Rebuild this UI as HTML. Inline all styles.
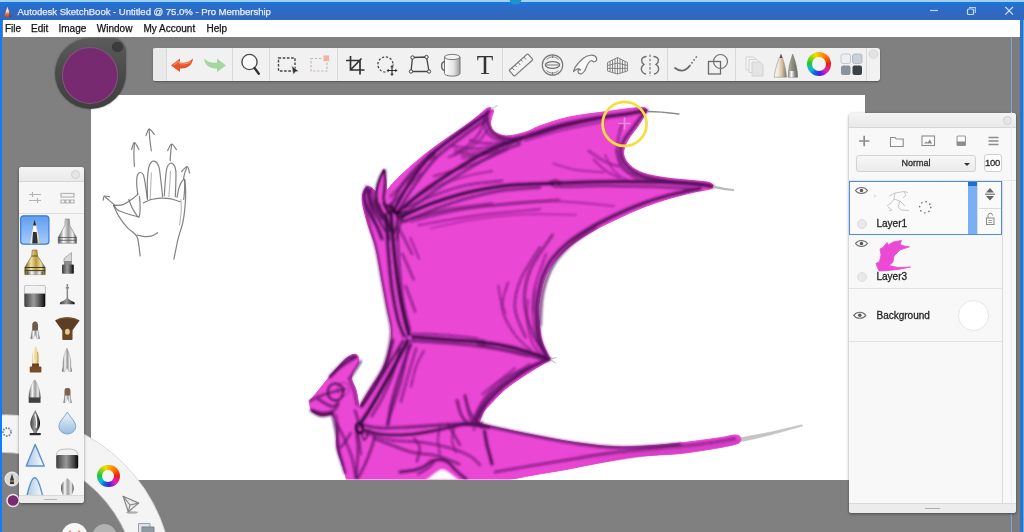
<!DOCTYPE html>
<html>
<head>
<meta charset="utf-8">
<title>Autodesk SketchBook</title>
<style>
*{box-sizing:border-box;margin:0;padding:0}
html,body{width:1024px;height:532px;overflow:hidden;background:#808080;font-family:"Liberation Sans",sans-serif}
#app{position:relative;width:1024px;height:532px;overflow:hidden;background:#808080;filter:blur(.4px)}
.abs{position:absolute}
#topstrip{left:0;top:0;width:1024px;height:2px;background:#9fd2f2}
#titlebar{left:0;top:1.5px;width:1024px;height:19px;background:linear-gradient(#1c76dc 0,#2b6ccb 5px,#2f69c0 10px,#2f68bf 17.500px,#35599a 19px);color:#e4eefc;font-size:9.6px;line-height:19px}
#titlebar span{-webkit-text-stroke:.25px #e4eefc;position:absolute;left:17.5px;top:0;white-space:nowrap;letter-spacing:-.05px}
#menubar{left:2.5px;top:20.3px;width:1018.5px;height:16.3px;background:#fff;font-size:10px;color:#111;line-height:16px}
#menubar span{-webkit-text-stroke:.25px #111;position:absolute;top:1px;white-space:nowrap}
#lborder{left:0;top:20px;width:2.2px;height:512px;background:#0b7dff}
#rborder{left:1019.6px;top:20px;width:4.4px;height:512px;background:linear-gradient(90deg,#2b73c9 0,#2b73c9 3.2px,#6fc0ff 3.6px)}
#rshade{left:1011px;top:37px;width:10px;height:495px;background:#7b7c7e}
#rline{left:1010.5px;top:37px;width:1px;height:495px;background:#7aaeec;opacity:.8}
#canvas{left:91px;top:95px;width:774px;height:384.5px;background:#fff}
#toolbar{left:152.5px;top:48px;width:727.5px;height:33px;background:#f1f1f1;border-radius:3px;box-shadow:0 1px 2px rgba(0,0,0,.35)}
.sep{position:absolute;top:0;width:1px;height:33px;background:#dcdcdc}
#layers{left:848.5px;top:112.5px;width:167px;height:400px;background:#f8f8f8;border-radius:3px;box-shadow:0 1px 3px rgba(0,0,0,.45);overflow:hidden}
#brushes{left:19px;top:166.5px;width:65px;height:336.5px;background:#f6f6f6;border-radius:3px;box-shadow:0 1px 3px rgba(0,0,0,.45);overflow:hidden}
.ptitle{position:absolute;left:0;top:0;right:0;height:15px;background:linear-gradient(#f4f4f4,#e9e9e9);border-bottom:1px solid #d6d6d6}
.pclose{position:absolute;width:9px;height:9px;border-radius:50%;border:1px solid #d0d0d0;background:#e6e6e6}
.lt{-webkit-text-stroke:.3px #2a2a2a;font-size:10px;color:#222;position:absolute;white-space:nowrap}
</style>
</head>
<body>
<div id="app">
  <div id="rshade" class="abs"></div>
  <div id="rline" class="abs"></div>
  <div id="canvas" class="abs"></div>
<svg id="art" class="abs" style="left:0;top:0" width="1024" height="532" viewBox="0 0 1024 532">
<defs><clipPath id="cv"><rect x="91" y="95" width="774" height="384.5"/></clipPath><filter id="b1" x="-5%" y="-5%" width="110%" height="110%"><feGaussianBlur stdDeviation=".6"/></filter><filter id="b2" x="-5%" y="-5%" width="110%" height="110%"><feGaussianBlur stdDeviation=".8"/></filter><linearGradient id="tailg" gradientUnits="userSpaceOnUse" x1="560" y1="0" x2="640" y2="0"><stop offset="0" stop-color="#c233b6" stop-opacity="0"/><stop offset="1" stop-color="#c233b6" stop-opacity=".45"/></linearGradient><filter id="b3" x="-5%" y="-5%" width="110%" height="110%"><feGaussianBlur stdDeviation=".45"/></filter></defs>
<g clip-path="url(#cv)">
<path d="M486.5 108.5 C487.2 108.3 489.3 107.1 490.5 107.5 C491.7 107.9 493.3 109.2 493.5 111.0 C493.7 112.8 492.0 115.7 491.5 118.0 C491.0 120.3 490.0 122.7 490.5 125.0 C491.0 127.3 492.1 130.3 494.7 132.1 C497.3 133.9 501.2 136.0 506.4 136.0 C511.6 136.0 520.4 133.7 526.0 132.0 C531.6 130.3 532.8 128.3 540.0 125.8 C547.2 123.3 558.5 119.3 569.3 117.0 C580.0 114.7 593.8 113.3 604.5 111.8 C615.2 110.3 627.2 108.7 633.8 108.0 C640.4 107.3 641.7 107.1 644.0 107.5 C646.3 107.9 646.9 110.0 647.5 110.5 C646.8 111.8 644.6 115.4 643.0 118.0 C641.4 120.6 640.3 122.6 637.8 126.3 C635.3 130.0 630.4 135.4 628.0 140.0 C625.6 144.6 623.2 149.5 623.5 153.7 C623.8 157.9 626.6 162.2 630.0 165.4 C633.4 168.7 637.4 171.1 643.6 173.2 C649.8 175.3 658.2 176.7 667.0 178.0 C675.8 179.3 689.4 180.2 696.4 181.0 C703.4 181.8 706.0 181.6 709.0 182.5 C712.0 183.4 713.6 185.8 714.5 186.5 C713.4 187.0 711.6 188.5 708.0 189.5 C704.4 190.5 700.0 190.6 692.8 192.3 C685.6 194.1 673.2 197.3 664.6 200.0 C656.0 202.7 648.9 205.1 641.0 208.2 C633.1 211.3 625.3 215.1 617.5 218.8 C609.7 222.5 601.8 226.0 594.0 230.5 C586.2 235.0 577.2 240.5 570.5 245.8 C563.8 251.1 558.3 256.8 554.0 262.3 C549.7 267.8 547.0 272.8 544.7 278.7 C542.4 284.6 541.0 291.7 540.0 297.5 C539.0 303.3 538.5 306.9 538.7 313.5 C538.9 320.1 539.8 330.8 541.0 337.0 C542.2 343.2 544.3 347.2 546.0 351.0 C547.7 354.8 550.2 358.1 551.0 359.5 C549.3 360.4 545.8 362.3 541.0 365.2 C536.2 368.1 528.2 373.1 522.3 377.0 C516.4 380.9 510.9 384.4 505.8 388.7 C500.7 393.0 495.4 398.9 491.7 402.8 C488.0 406.7 485.5 408.6 483.4 412.0 C481.3 415.4 479.7 421.5 479.0 423.4 C484.2 424.6 499.2 428.1 510.3 430.4 C521.4 432.7 533.8 435.2 545.5 437.4 C557.2 439.5 568.9 441.7 580.6 443.3 C592.3 444.9 604.1 446.4 615.8 446.8 C627.5 447.2 640.2 446.2 650.9 445.6 C661.6 445.0 668.8 444.3 680.0 443.0 C691.2 441.7 708.7 439.3 718.0 438.0 C727.3 436.7 732.0 434.9 736.0 435.0 C740.0 435.1 740.8 437.9 741.8 438.5 C741.2 439.3 742.0 441.8 738.0 443.4 C734.0 445.0 727.8 446.2 718.0 447.9 C708.2 449.6 692.1 452.3 679.0 453.7 C665.9 455.1 651.7 454.8 639.2 456.2 C626.7 457.6 615.7 459.9 604.0 462.0 C592.3 464.1 580.6 466.8 568.9 469.0 C557.2 471.2 543.5 473.2 533.7 475.0 C523.9 476.8 514.2 478.8 510.3 479.5 C483.0 479.5 373.7 479.5 346.4 479.5 C345.7 476.9 343.8 469.4 342.2 464.0 C340.6 458.6 337.9 453.8 337.0 447.2 C336.1 440.6 337.3 430.1 336.5 424.6 C335.7 419.1 333.0 416.0 332.3 414.3 C330.4 414.4 324.5 415.8 321.0 415.2 C317.5 414.6 313.4 412.9 311.5 410.5 C309.6 408.1 309.8 402.6 309.5 401.0 C310.9 399.3 314.7 395.1 318.0 391.0 C321.3 386.9 326.3 380.5 329.5 376.7 C332.7 372.9 334.2 371.1 337.0 368.0 C339.8 364.9 343.7 360.6 346.4 358.3 C349.1 356.1 351.1 354.9 353.0 354.5 C354.9 354.1 356.6 354.6 357.5 356.0 C358.4 357.4 359.5 359.2 358.5 362.6 C357.5 366.1 351.9 372.0 351.5 376.7 C351.1 381.4 355.1 385.6 356.3 390.8 C357.6 396.0 358.6 404.9 359.0 407.7 C360.7 404.9 365.0 397.4 369.0 390.8 C373.0 384.2 379.6 375.3 383.0 368.2 C386.4 361.1 388.1 354.7 389.5 348.4 C390.9 342.1 391.9 337.2 391.5 330.5 C391.1 323.8 388.7 316.7 387.0 307.9 C385.3 299.1 383.3 287.8 381.4 277.8 C379.5 267.8 377.9 256.5 375.7 247.7 C373.5 238.9 370.3 232.1 368.2 225.2 C366.1 218.2 363.9 211.0 363.0 206.0 C362.1 201.0 362.1 198.1 362.6 195.0 C363.2 191.9 364.9 188.4 366.3 187.2 C367.7 185.9 369.4 186.7 371.0 187.5 C372.6 188.3 375.2 191.2 376.0 192.0 C376.4 190.3 377.2 185.8 378.5 182.0 C379.8 178.2 382.9 171.6 383.8 169.5 C384.2 171.2 385.6 176.4 386.0 180.0 C386.4 183.6 386.4 189.2 386.5 191.0 C388.6 188.7 391.9 183.7 398.9 177.1 C405.8 170.5 416.8 160.5 428.2 151.7 C439.6 142.9 457.6 131.5 467.3 124.3 C477.0 117.1 483.3 111.1 486.5 108.5 Z" fill="#eb47d5" stroke="#eb47d5" stroke-width="1" stroke-linejoin="round" filter="url(#b1)"/>
<path d="M425.5 480 C432 476 438 469 442.5 469.2 C447 469.4 453 476 459.5 480 Z" fill="#fff" filter="url(#b2)"/>
<path d="M560 452 C600 455 640 452 680 448 C705 445 725 441.500 740 439 L738 443.400 C718 448 690 452.500 660 455 C625 459 590 465 560 470 Z" fill="url(#tailg)" filter="url(#b1)"/>
<g filter="url(#b2)">
<path d="M393.0 212.0 C395.8 207.0 403.7 191.4 410.0 182.0 C416.3 172.6 422.7 163.8 431.0 155.5 C439.3 147.2 451.1 138.7 460.0 132.0 C468.9 125.3 479.6 119.0 484.4 115.5 C489.2 112.0 488.2 111.8 489.0 111.0" fill="none" stroke="#8a1a92" stroke-width="5.4" stroke-opacity="0.32" stroke-linecap="round" stroke-linejoin="round"/>
<path d="M393.0 212.0 C395.8 207.0 403.7 191.4 410.0 182.0 C416.3 172.6 422.7 163.8 431.0 155.5 C439.3 147.2 451.1 138.7 460.0 132.0 C468.9 125.3 479.6 119.0 484.4 115.5 C489.2 112.0 488.2 111.8 489.0 111.0" fill="none" stroke="#4b0d52" stroke-width="2.7" stroke-opacity="1.00" stroke-linecap="round" stroke-linejoin="round"/>
<path d="M397.0 213.0 C399.8 208.5 407.5 195.2 414.0 186.0 C420.5 176.8 427.5 166.5 436.0 158.0 C444.5 149.5 456.5 141.5 465.0 135.0 C473.5 128.5 483.3 121.7 487.0 119.0" fill="none" stroke="#8a1a92" stroke-width="4.1" stroke-opacity="0.23" stroke-linecap="round" stroke-linejoin="round"/>
<path d="M397.0 213.0 C399.8 208.5 407.5 195.2 414.0 186.0 C420.5 176.8 427.5 166.5 436.0 158.0 C444.5 149.5 456.5 141.5 465.0 135.0 C473.5 128.5 483.3 121.7 487.0 119.0" fill="none" stroke="#4b0d52" stroke-width="2.0" stroke-opacity="0.80" stroke-linecap="round" stroke-linejoin="round"/>
<path d="M391.0 206.5 C393.2 202.4 397.5 190.7 404.0 182.0 C410.5 173.3 419.4 163.5 430.0 154.5 C440.6 145.5 457.9 135.0 467.5 128.0 C477.1 121.0 484.2 115.1 487.5 112.5" fill="none" stroke="#8a1a92" stroke-width="4.4" stroke-opacity="0.21" stroke-linecap="round" stroke-linejoin="round"/>
<path d="M391.0 206.5 C393.2 202.4 397.5 190.7 404.0 182.0 C410.5 173.3 419.4 163.5 430.0 154.5 C440.6 145.5 457.9 135.0 467.5 128.0 C477.1 121.0 484.2 115.1 487.5 112.5" fill="none" stroke="#4b0d52" stroke-width="2.2" stroke-opacity="0.72" stroke-linecap="round" stroke-linejoin="round"/>
<path d="M398.0 212.0 C402.5 208.3 414.4 197.7 425.0 190.0 C435.6 182.3 450.8 172.7 461.6 166.0 C472.4 159.3 480.7 154.4 490.0 150.0 C499.3 145.6 509.1 142.4 517.4 139.6 C525.7 136.8 532.4 135.3 540.0 133.0 C547.6 130.7 553.0 128.5 563.0 126.0 C573.0 123.5 588.8 120.1 600.0 118.0 C611.2 115.9 622.3 114.8 630.0 113.5 C637.7 112.2 643.3 111.0 646.0 110.5" fill="none" stroke="#8a1a92" stroke-width="6.1" stroke-opacity="0.29" stroke-linecap="round" stroke-linejoin="round"/>
<path d="M398.0 212.0 C402.5 208.3 414.4 197.7 425.0 190.0 C435.6 182.3 450.8 172.7 461.6 166.0 C472.4 159.3 480.7 154.4 490.0 150.0 C499.3 145.6 509.1 142.4 517.4 139.6 C525.7 136.8 532.4 135.3 540.0 133.0 C547.6 130.7 553.0 128.5 563.0 126.0 C573.0 123.5 588.8 120.1 600.0 118.0 C611.2 115.9 622.3 114.8 630.0 113.5 C637.7 112.2 643.3 111.0 646.0 110.5" fill="none" stroke="#4b0d52" stroke-width="3.1" stroke-opacity="1.00" stroke-linecap="round" stroke-linejoin="round"/>
<path d="M402.0 216.0 C406.7 212.3 419.5 201.5 430.0 194.0 C440.5 186.5 454.2 177.7 465.0 171.0 C475.8 164.3 485.8 158.5 495.0 154.0 C504.2 149.5 515.8 145.7 520.0 144.0" fill="none" stroke="#8a1a92" stroke-width="4.1" stroke-opacity="0.21" stroke-linecap="round" stroke-linejoin="round"/>
<path d="M402.0 216.0 C406.7 212.3 419.5 201.5 430.0 194.0 C440.5 186.5 454.2 177.7 465.0 171.0 C475.8 164.3 485.8 158.5 495.0 154.0 C504.2 149.5 515.8 145.7 520.0 144.0" fill="none" stroke="#4b0d52" stroke-width="2.0" stroke-opacity="0.72" stroke-linecap="round" stroke-linejoin="round"/>
<path d="M520.0 137.5 C526.7 135.4 546.7 128.3 560.0 125.0 C573.3 121.7 586.7 119.7 600.0 117.5 C613.3 115.3 633.3 112.9 640.0 112.0" fill="none" stroke="#8a1a92" stroke-width="4.4" stroke-opacity="0.19" stroke-linecap="round" stroke-linejoin="round"/>
<path d="M520.0 137.5 C526.7 135.4 546.7 128.3 560.0 125.0 C573.3 121.7 586.7 119.7 600.0 117.5 C613.3 115.3 633.3 112.9 640.0 112.0" fill="none" stroke="#4b0d52" stroke-width="2.2" stroke-opacity="0.65" stroke-linecap="round" stroke-linejoin="round"/>
<path d="M400.6 217.0 C405.5 214.8 419.8 207.8 430.0 204.0 C440.2 200.2 451.6 196.7 461.6 194.0 C471.6 191.3 481.5 189.5 490.0 188.0 C498.5 186.5 501.5 185.8 512.4 185.0 C523.3 184.2 542.6 183.8 555.5 183.3 C568.4 182.8 579.2 182.3 590.0 182.0 C600.8 181.7 608.3 181.5 620.0 181.5 C631.7 181.5 646.7 181.5 660.0 182.0 C673.3 182.5 691.3 183.8 700.0 184.5 C708.7 185.2 710.0 186.2 712.0 186.5" fill="none" stroke="#8a1a92" stroke-width="6.1" stroke-opacity="0.29" stroke-linecap="round" stroke-linejoin="round"/>
<path d="M400.6 217.0 C405.5 214.8 419.8 207.8 430.0 204.0 C440.2 200.2 451.6 196.7 461.6 194.0 C471.6 191.3 481.5 189.5 490.0 188.0 C498.5 186.5 501.5 185.8 512.4 185.0 C523.3 184.2 542.6 183.8 555.5 183.3 C568.4 182.8 579.2 182.3 590.0 182.0 C600.8 181.7 608.3 181.5 620.0 181.5 C631.7 181.5 646.7 181.5 660.0 182.0 C673.3 182.5 691.3 183.8 700.0 184.5 C708.7 185.2 710.0 186.2 712.0 186.5" fill="none" stroke="#4b0d52" stroke-width="3.1" stroke-opacity="1.00" stroke-linecap="round" stroke-linejoin="round"/>
<path d="M404.0 222.0 C409.2 219.8 424.8 212.8 435.0 209.0 C445.2 205.2 454.2 202.0 465.0 199.0 C475.8 196.0 487.5 192.9 500.0 191.0 C512.5 189.1 533.3 188.1 540.0 187.5" fill="none" stroke="#8a1a92" stroke-width="4.1" stroke-opacity="0.21" stroke-linecap="round" stroke-linejoin="round"/>
<path d="M404.0 222.0 C409.2 219.8 424.8 212.8 435.0 209.0 C445.2 205.2 454.2 202.0 465.0 199.0 C475.8 196.0 487.5 192.9 500.0 191.0 C512.5 189.1 533.3 188.1 540.0 187.5" fill="none" stroke="#4b0d52" stroke-width="2.0" stroke-opacity="0.72" stroke-linecap="round" stroke-linejoin="round"/>
<path d="M560.0 187.0 C566.7 186.8 585.0 186.1 600.0 186.0 C615.0 185.9 633.3 186.0 650.0 186.5 C666.7 187.0 691.7 188.6 700.0 189.0" fill="none" stroke="#8a1a92" stroke-width="4.1" stroke-opacity="0.19" stroke-linecap="round" stroke-linejoin="round"/>
<path d="M560.0 187.0 C566.7 186.8 585.0 186.1 600.0 186.0 C615.0 185.9 633.3 186.0 650.0 186.5 C666.7 187.0 691.7 188.6 700.0 189.0" fill="none" stroke="#4b0d52" stroke-width="2.0" stroke-opacity="0.65" stroke-linecap="round" stroke-linejoin="round"/>
<ellipse cx="431.5" cy="156" rx="3.6" ry="2.4" transform="rotate(-40 431.5 156)" fill="none" stroke="#3a0b3e" stroke-width="1.3" stroke-opacity=".8"/>
<ellipse cx="517.5" cy="139.5" rx="4" ry="2.4" transform="rotate(-18 517.5 139.5)" fill="none" stroke="#3a0b3e" stroke-width="1.3" stroke-opacity=".75"/>
<path d="M548 183 L555 180 L562 182.5 L556 187.5 Z" fill="none" stroke="#3a0b3e" stroke-width="1.4" stroke-opacity=".8"/>
<ellipse cx="481.5" cy="343" rx="4.2" ry="3" fill="#6a1a6a" fill-opacity=".5" stroke="#3a0b3e" stroke-width="1.2" stroke-opacity=".7"/>
<circle cx="410" cy="337.5" r="3.6" fill="none" stroke="#3a0b3e" stroke-width="1.3" stroke-opacity=".8"/>
<path d="M487.0 113.0 C487.2 114.8 487.0 120.7 488.0 124.0 C489.0 127.3 490.3 130.7 493.0 133.0 C495.7 135.3 500.0 137.0 504.0 138.0 C508.0 139.0 514.8 138.8 517.0 139.0" fill="none" stroke="#8a1a92" stroke-width="5.1" stroke-opacity="0.25" stroke-linecap="round" stroke-linejoin="round"/>
<path d="M487.0 113.0 C487.2 114.8 487.0 120.7 488.0 124.0 C489.0 127.3 490.3 130.7 493.0 133.0 C495.7 135.3 500.0 137.0 504.0 138.0 C508.0 139.0 514.8 138.8 517.0 139.0" fill="none" stroke="#4b0d52" stroke-width="2.5" stroke-opacity="0.87" stroke-linecap="round" stroke-linejoin="round"/>
<path d="M484.0 118.0 C484.2 119.7 483.7 124.8 485.0 128.0 C486.3 131.2 488.7 134.8 492.0 137.0 C495.3 139.2 502.8 140.3 505.0 141.0" fill="none" stroke="#8a1a92" stroke-width="3.7" stroke-opacity="0.19" stroke-linecap="round" stroke-linejoin="round"/>
<path d="M484.0 118.0 C484.2 119.7 483.7 124.8 485.0 128.0 C486.3 131.2 488.7 134.8 492.0 137.0 C495.3 139.2 502.8 140.3 505.0 141.0" fill="none" stroke="#4b0d52" stroke-width="1.9" stroke-opacity="0.65" stroke-linecap="round" stroke-linejoin="round"/>
<path d="M470.0 140.0 C471.7 140.5 475.8 142.5 480.0 143.0 C484.2 143.5 490.0 143.3 495.0 143.0 C500.0 142.7 507.5 141.3 510.0 141.0" fill="none" stroke="#8a1a92" stroke-width="3.4" stroke-opacity="0.17" stroke-linecap="round" stroke-linejoin="round"/>
<path d="M470.0 140.0 C471.7 140.5 475.8 142.5 480.0 143.0 C484.2 143.5 490.0 143.3 495.0 143.0 C500.0 142.7 507.5 141.3 510.0 141.0" fill="none" stroke="#4b0d52" stroke-width="1.7" stroke-opacity="0.58" stroke-linecap="round" stroke-linejoin="round"/>
<path d="M455.0 150.0 C457.5 150.5 464.2 153.0 470.0 153.0 C475.8 153.0 483.7 151.5 490.0 150.0 C496.3 148.5 505.0 145.0 508.0 144.0" fill="none" stroke="#8a1a92" stroke-width="3.4" stroke-opacity="0.15" stroke-linecap="round" stroke-linejoin="round"/>
<path d="M455.0 150.0 C457.5 150.5 464.2 153.0 470.0 153.0 C475.8 153.0 483.7 151.5 490.0 150.0 C496.3 148.5 505.0 145.0 508.0 144.0" fill="none" stroke="#4b0d52" stroke-width="1.7" stroke-opacity="0.51" stroke-linecap="round" stroke-linejoin="round"/>
<path d="M462.0 158.0 C465.0 157.7 474.0 157.3 480.0 156.0 C486.0 154.7 495.0 151.0 498.0 150.0" fill="none" stroke="#8a1a92" stroke-width="3.4" stroke-opacity="0.15" stroke-linecap="round" stroke-linejoin="round"/>
<path d="M462.0 158.0 C465.0 157.7 474.0 157.3 480.0 156.0 C486.0 154.7 495.0 151.0 498.0 150.0" fill="none" stroke="#4b0d52" stroke-width="1.7" stroke-opacity="0.51" stroke-linecap="round" stroke-linejoin="round"/>
<path d="M391.0 214.0 C391.5 220.0 392.7 237.3 394.0 250.0 C395.3 262.7 397.2 278.3 399.0 290.0 C400.8 301.7 403.3 312.7 405.0 320.0 C406.7 327.3 408.3 331.7 409.0 334.0" fill="none" stroke="#8a1a92" stroke-width="6.1" stroke-opacity="0.32" stroke-linecap="round" stroke-linejoin="round"/>
<path d="M391.0 214.0 C391.5 220.0 392.7 237.3 394.0 250.0 C395.3 262.7 397.2 278.3 399.0 290.0 C400.8 301.7 403.3 312.7 405.0 320.0 C406.7 327.3 408.3 331.7 409.0 334.0" fill="none" stroke="#4b0d52" stroke-width="3.1" stroke-opacity="1.00" stroke-linecap="round" stroke-linejoin="round"/>
<path d="M386.0 215.0 C386.3 220.8 387.0 237.5 388.0 250.0 C389.0 262.5 390.3 278.3 392.0 290.0 C393.7 301.7 396.0 312.3 398.0 320.0 C400.0 327.7 403.0 333.3 404.0 336.0" fill="none" stroke="#8a1a92" stroke-width="5.1" stroke-opacity="0.25" stroke-linecap="round" stroke-linejoin="round"/>
<path d="M386.0 215.0 C386.3 220.8 387.0 237.5 388.0 250.0 C389.0 262.5 390.3 278.3 392.0 290.0 C393.7 301.7 396.0 312.3 398.0 320.0 C400.0 327.7 403.0 333.3 404.0 336.0" fill="none" stroke="#4b0d52" stroke-width="2.5" stroke-opacity="0.87" stroke-linecap="round" stroke-linejoin="round"/>
<path d="M397.0 222.0 C397.3 228.3 398.0 247.0 399.0 260.0 C400.0 273.0 401.2 288.3 403.0 300.0 C404.8 311.7 408.8 325.0 410.0 330.0" fill="none" stroke="#8a1a92" stroke-width="3.7" stroke-opacity="0.19" stroke-linecap="round" stroke-linejoin="round"/>
<path d="M397.0 222.0 C397.3 228.3 398.0 247.0 399.0 260.0 C400.0 273.0 401.2 288.3 403.0 300.0 C404.8 311.7 408.8 325.0 410.0 330.0" fill="none" stroke="#4b0d52" stroke-width="1.9" stroke-opacity="0.65" stroke-linecap="round" stroke-linejoin="round"/>
<path d="M407.5 341.0 C405.4 345.0 399.6 356.5 395.0 365.0 C390.4 373.5 384.5 384.2 380.0 392.0 C375.5 399.8 371.3 406.7 368.0 412.0 C364.7 417.3 361.3 422.0 360.0 424.0" fill="none" stroke="#8a1a92" stroke-width="6.1" stroke-opacity="0.32" stroke-linecap="round" stroke-linejoin="round"/>
<path d="M407.5 341.0 C405.4 345.0 399.6 356.5 395.0 365.0 C390.4 373.5 384.5 384.2 380.0 392.0 C375.5 399.8 371.3 406.7 368.0 412.0 C364.7 417.3 361.3 422.0 360.0 424.0" fill="none" stroke="#4b0d52" stroke-width="3.1" stroke-opacity="1.00" stroke-linecap="round" stroke-linejoin="round"/>
<path d="M411.0 344.0 C409.5 348.0 404.7 360.1 402.0 368.0 C399.3 375.9 396.6 384.6 394.6 391.6 C392.6 398.6 391.1 404.4 390.0 410.0 C388.9 415.6 388.3 422.5 388.0 425.0" fill="none" stroke="#8a1a92" stroke-width="4.4" stroke-opacity="0.23" stroke-linecap="round" stroke-linejoin="round"/>
<path d="M411.0 344.0 C409.5 348.0 404.7 360.1 402.0 368.0 C399.3 375.9 396.6 384.6 394.6 391.6 C392.6 398.6 391.1 404.4 390.0 410.0 C388.9 415.6 388.3 422.5 388.0 425.0" fill="none" stroke="#4b0d52" stroke-width="2.2" stroke-opacity="0.80" stroke-linecap="round" stroke-linejoin="round"/>
<path d="M403.0 341.0 C400.7 344.8 393.8 356.2 389.0 364.0 C384.2 371.8 378.5 381.0 374.0 388.0 C369.5 395.0 364.0 403.0 362.0 406.0" fill="none" stroke="#8a1a92" stroke-width="4.1" stroke-opacity="0.21" stroke-linecap="round" stroke-linejoin="round"/>
<path d="M403.0 341.0 C400.7 344.8 393.8 356.2 389.0 364.0 C384.2 371.8 378.5 381.0 374.0 388.0 C369.5 395.0 364.0 403.0 362.0 406.0" fill="none" stroke="#4b0d52" stroke-width="2.0" stroke-opacity="0.72" stroke-linecap="round" stroke-linejoin="round"/>
<path d="M413.0 337.0 C417.5 337.3 428.9 338.2 440.0 339.0 C451.1 339.8 468.0 340.7 479.7 342.0 C491.4 343.3 500.8 345.0 510.0 347.0 C519.2 349.0 528.5 352.0 535.0 354.0 C541.5 356.0 546.7 358.2 549.0 359.0" fill="none" stroke="#8a1a92" stroke-width="6.1" stroke-opacity="0.29" stroke-linecap="round" stroke-linejoin="round"/>
<path d="M413.0 337.0 C417.5 337.3 428.9 338.2 440.0 339.0 C451.1 339.8 468.0 340.7 479.7 342.0 C491.4 343.3 500.8 345.0 510.0 347.0 C519.2 349.0 528.5 352.0 535.0 354.0 C541.5 356.0 546.7 358.2 549.0 359.0" fill="none" stroke="#4b0d52" stroke-width="3.1" stroke-opacity="1.00" stroke-linecap="round" stroke-linejoin="round"/>
<path d="M413.0 341.0 C418.3 341.3 433.8 342.1 445.0 343.0 C456.2 343.9 468.3 345.0 480.0 346.5 C491.7 348.0 504.2 349.8 515.0 352.0 C525.8 354.2 540.0 358.7 545.0 360.0" fill="none" stroke="#8a1a92" stroke-width="4.1" stroke-opacity="0.21" stroke-linecap="round" stroke-linejoin="round"/>
<path d="M413.0 341.0 C418.3 341.3 433.8 342.1 445.0 343.0 C456.2 343.9 468.3 345.0 480.0 346.5 C491.7 348.0 504.2 349.8 515.0 352.0 C525.8 354.2 540.0 358.7 545.0 360.0" fill="none" stroke="#4b0d52" stroke-width="2.0" stroke-opacity="0.72" stroke-linecap="round" stroke-linejoin="round"/>
<path d="M414.0 333.5 C419.2 333.8 434.3 334.2 445.0 335.0 C455.7 335.8 472.5 337.9 478.0 338.5" fill="none" stroke="#8a1a92" stroke-width="3.4" stroke-opacity="0.17" stroke-linecap="round" stroke-linejoin="round"/>
<path d="M414.0 333.5 C419.2 333.8 434.3 334.2 445.0 335.0 C455.7 335.8 472.5 337.9 478.0 338.5" fill="none" stroke="#4b0d52" stroke-width="1.7" stroke-opacity="0.58" stroke-linecap="round" stroke-linejoin="round"/>
<path d="M366.0 190.0 C365.7 191.7 363.5 194.3 364.0 200.0 C364.5 205.7 367.0 216.0 369.0 224.0 C371.0 232.0 373.9 239.0 376.0 248.0 C378.1 257.0 379.7 268.0 381.5 278.0 C383.3 288.0 385.4 299.3 387.0 308.0 C388.6 316.7 390.7 323.3 391.0 330.0 C391.3 336.7 390.3 341.7 389.0 348.0 C387.7 354.3 386.3 360.8 383.0 368.0 C379.7 375.2 372.8 384.7 369.0 391.0 C365.2 397.3 361.5 403.5 360.0 406.0" fill="none" stroke="#8a1a92" stroke-width="4.1" stroke-opacity="0.19" stroke-linecap="round" stroke-linejoin="round"/>
<path d="M366.0 190.0 C365.7 191.7 363.5 194.3 364.0 200.0 C364.5 205.7 367.0 216.0 369.0 224.0 C371.0 232.0 373.9 239.0 376.0 248.0 C378.1 257.0 379.7 268.0 381.5 278.0 C383.3 288.0 385.4 299.3 387.0 308.0 C388.6 316.7 390.7 323.3 391.0 330.0 C391.3 336.7 390.3 341.7 389.0 348.0 C387.7 354.3 386.3 360.8 383.0 368.0 C379.7 375.2 372.8 384.7 369.0 391.0 C365.2 397.3 361.5 403.5 360.0 406.0" fill="none" stroke="#4b0d52" stroke-width="2.0" stroke-opacity="0.65" stroke-linecap="round" stroke-linejoin="round"/>
<path d="M700.0 188.5 C694.0 189.8 674.3 193.8 664.0 196.5 C653.7 199.2 646.2 201.9 638.0 205.0 C629.8 208.1 622.8 211.3 615.0 215.0 C607.2 218.7 599.3 222.4 591.5 227.0 C583.7 231.6 574.7 237.1 568.0 242.5 C561.3 247.9 555.8 253.8 551.5 259.5 C547.2 265.2 544.8 270.9 542.5 277.0 C540.2 283.1 539.0 290.0 538.0 296.0 C537.0 302.0 536.4 306.2 536.5 313.0 C536.6 319.8 536.8 329.8 538.5 337.0 C540.2 344.2 545.6 352.8 547.0 356.0" fill="none" stroke="#8a1a92" stroke-width="5.4" stroke-opacity="0.25" stroke-linecap="round" stroke-linejoin="round"/>
<path d="M700.0 188.5 C694.0 189.8 674.3 193.8 664.0 196.5 C653.7 199.2 646.2 201.9 638.0 205.0 C629.8 208.1 622.8 211.3 615.0 215.0 C607.2 218.7 599.3 222.4 591.5 227.0 C583.7 231.6 574.7 237.1 568.0 242.5 C561.3 247.9 555.8 253.8 551.5 259.5 C547.2 265.2 544.8 270.9 542.5 277.0 C540.2 283.1 539.0 290.0 538.0 296.0 C537.0 302.0 536.4 306.2 536.5 313.0 C536.6 319.8 536.8 329.8 538.5 337.0 C540.2 344.2 545.6 352.8 547.0 356.0" fill="none" stroke="#4b0d52" stroke-width="2.7" stroke-opacity="0.87" stroke-linecap="round" stroke-linejoin="round"/>
<path d="M688.0 190.0 C681.3 192.0 660.7 197.4 648.0 202.0 C635.3 206.6 623.2 211.8 612.0 217.5 C600.8 223.2 590.2 229.1 581.0 236.0 C571.8 242.9 563.0 251.2 557.0 259.0 C551.0 266.8 547.8 274.5 545.0 283.0 C542.2 291.5 540.8 301.3 540.0 310.0 C539.2 318.7 539.2 328.0 540.0 335.0 C540.8 342.0 544.2 349.2 545.0 352.0" fill="none" stroke="#8a1a92" stroke-width="3.7" stroke-opacity="0.17" stroke-linecap="round" stroke-linejoin="round"/>
<path d="M688.0 190.0 C681.3 192.0 660.7 197.4 648.0 202.0 C635.3 206.6 623.2 211.8 612.0 217.5 C600.8 223.2 590.2 229.1 581.0 236.0 C571.8 242.9 563.0 251.2 557.0 259.0 C551.0 266.8 547.8 274.5 545.0 283.0 C542.2 291.5 540.8 301.3 540.0 310.0 C539.2 318.7 539.2 328.0 540.0 335.0 C540.8 342.0 544.2 349.2 545.0 352.0" fill="none" stroke="#4b0d52" stroke-width="1.9" stroke-opacity="0.58" stroke-linecap="round" stroke-linejoin="round"/>
<path d="M596.0 228.0 C591.7 231.0 577.3 239.3 570.0 246.0 C562.7 252.7 556.5 259.8 552.0 268.0 C547.5 276.2 544.8 285.5 543.0 295.0 C541.2 304.5 541.3 320.0 541.0 325.0" fill="none" stroke="#8a1a92" stroke-width="3.4" stroke-opacity="0.15" stroke-linecap="round" stroke-linejoin="round"/>
<path d="M596.0 228.0 C591.7 231.0 577.3 239.3 570.0 246.0 C562.7 252.7 556.5 259.8 552.0 268.0 C547.5 276.2 544.8 285.5 543.0 295.0 C541.2 304.5 541.3 320.0 541.0 325.0" fill="none" stroke="#4b0d52" stroke-width="1.7" stroke-opacity="0.51" stroke-linecap="round" stroke-linejoin="round"/>
<path d="M535.0 290.0 C534.7 294.2 532.7 306.7 533.0 315.0 C533.3 323.3 535.0 333.2 537.0 340.0 C539.0 346.8 543.7 353.3 545.0 356.0" fill="none" stroke="#8a1a92" stroke-width="3.4" stroke-opacity="0.13" stroke-linecap="round" stroke-linejoin="round"/>
<path d="M535.0 290.0 C534.7 294.2 532.7 306.7 533.0 315.0 C533.3 323.3 535.0 333.2 537.0 340.0 C539.0 346.8 543.7 353.3 545.0 356.0" fill="none" stroke="#4b0d52" stroke-width="1.7" stroke-opacity="0.43" stroke-linecap="round" stroke-linejoin="round"/>
<path d="M528.0 300.0 C527.8 303.3 526.3 313.0 527.0 320.0 C527.7 327.0 529.7 336.2 532.0 342.0 C534.3 347.8 539.5 352.8 541.0 355.0" fill="none" stroke="#8a1a92" stroke-width="3.4" stroke-opacity="0.13" stroke-linecap="round" stroke-linejoin="round"/>
<path d="M528.0 300.0 C527.8 303.3 526.3 313.0 527.0 320.0 C527.7 327.0 529.7 336.2 532.0 342.0 C534.3 347.8 539.5 352.8 541.0 355.0" fill="none" stroke="#4b0d52" stroke-width="1.7" stroke-opacity="0.43" stroke-linecap="round" stroke-linejoin="round"/>
<path d="M644.0 113.0 C642.4 115.2 637.9 121.3 634.5 126.0 C631.1 130.7 625.8 136.3 623.5 141.0 C621.2 145.7 620.3 149.8 621.0 154.0 C621.7 158.2 624.0 162.9 627.5 166.5 C631.0 170.1 635.6 173.2 642.0 175.5 C648.4 177.8 656.8 179.2 666.0 180.5 C675.2 181.8 689.7 182.7 697.0 183.5 C704.3 184.3 707.8 185.2 710.0 185.5" fill="none" stroke="#8a1a92" stroke-width="5.4" stroke-opacity="0.23" stroke-linecap="round" stroke-linejoin="round"/>
<path d="M644.0 113.0 C642.4 115.2 637.9 121.3 634.5 126.0 C631.1 130.7 625.8 136.3 623.5 141.0 C621.2 145.7 620.3 149.8 621.0 154.0 C621.7 158.2 624.0 162.9 627.5 166.5 C631.0 170.1 635.6 173.2 642.0 175.5 C648.4 177.8 656.8 179.2 666.0 180.5 C675.2 181.8 689.7 182.7 697.0 183.5 C704.3 184.3 707.8 185.2 710.0 185.5" fill="none" stroke="#4b0d52" stroke-width="2.7" stroke-opacity="0.80" stroke-linecap="round" stroke-linejoin="round"/>
<path d="M622.0 124.0 C621.3 126.7 618.7 134.7 618.0 140.0 C617.3 145.3 616.7 151.0 618.0 156.0 C619.3 161.0 622.0 166.3 626.0 170.0 C630.0 173.7 635.5 176.0 642.0 178.0 C648.5 180.0 661.2 181.3 665.0 182.0" fill="none" stroke="#8a1a92" stroke-width="3.7" stroke-opacity="0.17" stroke-linecap="round" stroke-linejoin="round"/>
<path d="M622.0 124.0 C621.3 126.7 618.7 134.7 618.0 140.0 C617.3 145.3 616.7 151.0 618.0 156.0 C619.3 161.0 622.0 166.3 626.0 170.0 C630.0 173.7 635.5 176.0 642.0 178.0 C648.5 180.0 661.2 181.3 665.0 182.0" fill="none" stroke="#4b0d52" stroke-width="1.9" stroke-opacity="0.58" stroke-linecap="round" stroke-linejoin="round"/>
<path d="M616.0 150.0 C617.0 153.0 618.0 162.8 622.0 168.0 C626.0 173.2 637.0 178.8 640.0 181.0" fill="none" stroke="#8a1a92" stroke-width="3.4" stroke-opacity="0.13" stroke-linecap="round" stroke-linejoin="round"/>
<path d="M616.0 150.0 C617.0 153.0 618.0 162.8 622.0 168.0 C626.0 173.2 637.0 178.8 640.0 181.0" fill="none" stroke="#4b0d52" stroke-width="1.7" stroke-opacity="0.43" stroke-linecap="round" stroke-linejoin="round"/>
<path d="M605.0 155.0 C606.7 157.8 610.5 167.3 615.0 172.0 C619.5 176.7 629.2 181.2 632.0 183.0" fill="none" stroke="#8a1a92" stroke-width="3.4" stroke-opacity="0.10" stroke-linecap="round" stroke-linejoin="round"/>
<path d="M605.0 155.0 C606.7 157.8 610.5 167.3 615.0 172.0 C619.5 176.7 629.2 181.2 632.0 183.0" fill="none" stroke="#4b0d52" stroke-width="1.7" stroke-opacity="0.36" stroke-linecap="round" stroke-linejoin="round"/>
<path d="M547.0 360.0 C544.7 361.0 538.0 363.2 533.0 366.0 C528.0 368.8 522.3 372.8 517.0 376.5 C511.7 380.2 505.8 384.3 501.0 388.5 C496.2 392.7 491.5 397.6 488.0 401.5 C484.5 405.4 482.0 408.4 480.0 412.0 C478.0 415.6 476.7 421.2 476.0 423.0" fill="none" stroke="#8a1a92" stroke-width="5.4" stroke-opacity="0.25" stroke-linecap="round" stroke-linejoin="round"/>
<path d="M547.0 360.0 C544.7 361.0 538.0 363.2 533.0 366.0 C528.0 368.8 522.3 372.8 517.0 376.5 C511.7 380.2 505.8 384.3 501.0 388.5 C496.2 392.7 491.5 397.6 488.0 401.5 C484.5 405.4 482.0 408.4 480.0 412.0 C478.0 415.6 476.7 421.2 476.0 423.0" fill="none" stroke="#4b0d52" stroke-width="2.7" stroke-opacity="0.87" stroke-linecap="round" stroke-linejoin="round"/>
<path d="M540.0 363.0 C536.7 364.8 526.7 369.7 520.0 374.0 C513.3 378.3 505.5 384.2 500.0 389.0 C494.5 393.8 490.3 398.2 487.0 403.0 C483.7 407.8 481.2 415.5 480.0 418.0" fill="none" stroke="#8a1a92" stroke-width="3.7" stroke-opacity="0.17" stroke-linecap="round" stroke-linejoin="round"/>
<path d="M540.0 363.0 C536.7 364.8 526.7 369.7 520.0 374.0 C513.3 378.3 505.5 384.2 500.0 389.0 C494.5 393.8 490.3 398.2 487.0 403.0 C483.7 407.8 481.2 415.5 480.0 418.0" fill="none" stroke="#4b0d52" stroke-width="1.9" stroke-opacity="0.58" stroke-linecap="round" stroke-linejoin="round"/>
<path d="M530.0 364.0 C525.8 366.7 512.0 374.3 505.0 380.0 C498.0 385.7 492.5 392.2 488.0 398.0 C483.5 403.8 480.3 409.7 478.0 415.0 C475.7 420.3 474.7 427.5 474.0 430.0" fill="none" stroke="#8a1a92" stroke-width="3.4" stroke-opacity="0.15" stroke-linecap="round" stroke-linejoin="round"/>
<path d="M530.0 364.0 C525.8 366.7 512.0 374.3 505.0 380.0 C498.0 385.7 492.5 392.2 488.0 398.0 C483.5 403.8 480.3 409.7 478.0 415.0 C475.7 420.3 474.7 427.5 474.0 430.0" fill="none" stroke="#4b0d52" stroke-width="1.7" stroke-opacity="0.51" stroke-linecap="round" stroke-linejoin="round"/>
<path d="M515.0 368.0 C511.7 370.8 500.8 378.8 495.0 385.0 C489.2 391.2 483.8 398.3 480.0 405.0 C476.2 411.7 473.3 421.7 472.0 425.0" fill="none" stroke="#8a1a92" stroke-width="3.4" stroke-opacity="0.13" stroke-linecap="round" stroke-linejoin="round"/>
<path d="M515.0 368.0 C511.7 370.8 500.8 378.8 495.0 385.0 C489.2 391.2 483.8 398.3 480.0 405.0 C476.2 411.7 473.3 421.7 472.0 425.0" fill="none" stroke="#4b0d52" stroke-width="1.7" stroke-opacity="0.43" stroke-linecap="round" stroke-linejoin="round"/>
<path d="M479.0 424.0 C484.2 425.2 499.0 428.7 510.0 431.0 C521.0 433.3 533.3 435.8 545.0 438.0 C556.7 440.2 568.2 442.4 580.0 444.0 C591.8 445.6 604.2 447.1 616.0 447.5 C627.8 447.9 640.3 447.1 651.0 446.5 C661.7 445.9 675.2 444.4 680.0 444.0" fill="none" stroke="#8a1a92" stroke-width="4.8" stroke-opacity="0.21" stroke-linecap="round" stroke-linejoin="round"/>
<path d="M479.0 424.0 C484.2 425.2 499.0 428.7 510.0 431.0 C521.0 433.3 533.3 435.8 545.0 438.0 C556.7 440.2 568.2 442.4 580.0 444.0 C591.8 445.6 604.2 447.1 616.0 447.5 C627.8 447.9 640.3 447.1 651.0 446.5 C661.7 445.9 675.2 444.4 680.0 444.0" fill="none" stroke="#4b0d52" stroke-width="2.4" stroke-opacity="0.72" stroke-linecap="round" stroke-linejoin="round"/>
<path d="M495.0 472.0 C500.8 471.0 517.5 468.1 530.0 466.0 C542.5 463.9 556.7 461.7 570.0 459.5 C583.3 457.3 596.7 454.8 610.0 453.0 C623.3 451.2 635.0 450.5 650.0 449.0 C665.0 447.5 685.8 445.8 700.0 444.0 C714.2 442.2 729.2 439.4 735.0 438.5" fill="none" stroke="#8a1a92" stroke-width="4.1" stroke-opacity="0.19" stroke-linecap="round" stroke-linejoin="round"/>
<path d="M495.0 472.0 C500.8 471.0 517.5 468.1 530.0 466.0 C542.5 463.9 556.7 461.7 570.0 459.5 C583.3 457.3 596.7 454.8 610.0 453.0 C623.3 451.2 635.0 450.5 650.0 449.0 C665.0 447.5 685.8 445.8 700.0 444.0 C714.2 442.2 729.2 439.4 735.0 438.5" fill="none" stroke="#4b0d52" stroke-width="2.0" stroke-opacity="0.65" stroke-linecap="round" stroke-linejoin="round"/>
<path d="M484.5 431.0 C484.9 433.3 486.1 440.8 487.0 445.0 C487.9 449.2 489.2 452.8 490.0 456.0 C490.8 459.2 491.7 462.7 492.0 464.0" fill="none" stroke="#8a1a92" stroke-width="5.1" stroke-opacity="0.29" stroke-linecap="round" stroke-linejoin="round"/>
<path d="M484.5 431.0 C484.9 433.3 486.1 440.8 487.0 445.0 C487.9 449.2 489.2 452.8 490.0 456.0 C490.8 459.2 491.7 462.7 492.0 464.0" fill="none" stroke="#4b0d52" stroke-width="2.5" stroke-opacity="1.00" stroke-linecap="round" stroke-linejoin="round"/>
<path d="M360.0 424.0 C363.3 424.7 371.7 427.5 380.0 428.0 C388.3 428.5 400.0 427.5 410.0 427.0 C420.0 426.5 430.0 425.7 440.0 425.0 C450.0 424.3 463.0 423.3 470.0 423.0 C477.0 422.7 480.0 423.0 482.0 423.0" fill="none" stroke="#8a1a92" stroke-width="4.8" stroke-opacity="0.21" stroke-linecap="round" stroke-linejoin="round"/>
<path d="M360.0 424.0 C363.3 424.7 371.7 427.5 380.0 428.0 C388.3 428.5 400.0 427.5 410.0 427.0 C420.0 426.5 430.0 425.7 440.0 425.0 C450.0 424.3 463.0 423.3 470.0 423.0 C477.0 422.7 480.0 423.0 482.0 423.0" fill="none" stroke="#4b0d52" stroke-width="2.4" stroke-opacity="0.72" stroke-linecap="round" stroke-linejoin="round"/>
<path d="M362.0 432.0 C366.7 433.3 380.3 438.3 390.0 440.0 C399.7 441.7 410.0 440.7 420.0 442.0 C430.0 443.3 441.7 445.7 450.0 448.0 C458.3 450.3 465.0 453.2 470.0 456.0 C475.0 458.8 478.3 463.5 480.0 465.0" fill="none" stroke="#8a1a92" stroke-width="4.1" stroke-opacity="0.17" stroke-linecap="round" stroke-linejoin="round"/>
<path d="M362.0 432.0 C366.7 433.3 380.3 438.3 390.0 440.0 C399.7 441.7 410.0 440.7 420.0 442.0 C430.0 443.3 441.7 445.7 450.0 448.0 C458.3 450.3 465.0 453.2 470.0 456.0 C475.0 458.8 478.3 463.5 480.0 465.0" fill="none" stroke="#4b0d52" stroke-width="2.0" stroke-opacity="0.58" stroke-linecap="round" stroke-linejoin="round"/>
<path d="M337.0 424.0 C338.3 426.7 342.5 434.3 345.0 440.0 C347.5 445.7 350.2 451.7 352.0 458.0 C353.8 464.3 355.3 474.7 356.0 478.0" fill="none" stroke="#8a1a92" stroke-width="4.1" stroke-opacity="0.19" stroke-linecap="round" stroke-linejoin="round"/>
<path d="M337.0 424.0 C338.3 426.7 342.5 434.3 345.0 440.0 C347.5 445.7 350.2 451.7 352.0 458.0 C353.8 464.3 355.3 474.7 356.0 478.0" fill="none" stroke="#4b0d52" stroke-width="2.0" stroke-opacity="0.65" stroke-linecap="round" stroke-linejoin="round"/>
<path d="M356.0 430.0 C356.3 433.3 358.0 442.0 358.0 450.0 C358.0 458.0 356.3 473.3 356.0 478.0" fill="none" stroke="#8a1a92" stroke-width="4.1" stroke-opacity="0.21" stroke-linecap="round" stroke-linejoin="round"/>
<path d="M356.0 430.0 C356.3 433.3 358.0 442.0 358.0 450.0 C358.0 458.0 356.3 473.3 356.0 478.0" fill="none" stroke="#4b0d52" stroke-width="2.0" stroke-opacity="0.72" stroke-linecap="round" stroke-linejoin="round"/>
<path d="M440.0 425.0 C439.7 427.5 438.0 435.0 438.0 440.0 C438.0 445.0 439.7 452.5 440.0 455.0" fill="none" stroke="#8a1a92" stroke-width="3.4" stroke-opacity="0.15" stroke-linecap="round" stroke-linejoin="round"/>
<path d="M440.0 425.0 C439.7 427.5 438.0 435.0 438.0 440.0 C438.0 445.0 439.7 452.5 440.0 455.0" fill="none" stroke="#4b0d52" stroke-width="1.7" stroke-opacity="0.51" stroke-linecap="round" stroke-linejoin="round"/>
<path d="M455.0 425.0 C454.5 427.5 451.8 435.5 452.0 440.0 C452.2 444.5 455.3 450.0 456.0 452.0" fill="none" stroke="#8a1a92" stroke-width="3.4" stroke-opacity="0.15" stroke-linecap="round" stroke-linejoin="round"/>
<path d="M455.0 425.0 C454.5 427.5 451.8 435.5 452.0 440.0 C452.2 444.5 455.3 450.0 456.0 452.0" fill="none" stroke="#4b0d52" stroke-width="1.7" stroke-opacity="0.51" stroke-linecap="round" stroke-linejoin="round"/>
<path d="M465.0 395.0 C465.5 397.5 466.8 405.3 468.0 410.0 C469.2 414.7 471.3 420.8 472.0 423.0" fill="none" stroke="#8a1a92" stroke-width="3.7" stroke-opacity="0.17" stroke-linecap="round" stroke-linejoin="round"/>
<path d="M465.0 395.0 C465.5 397.5 466.8 405.3 468.0 410.0 C469.2 414.7 471.3 420.8 472.0 423.0" fill="none" stroke="#4b0d52" stroke-width="1.9" stroke-opacity="0.58" stroke-linecap="round" stroke-linejoin="round"/>
<path d="M458.0 400.0 C458.3 402.0 458.7 408.0 460.0 412.0 C461.3 416.0 465.0 422.0 466.0 424.0" fill="none" stroke="#8a1a92" stroke-width="3.4" stroke-opacity="0.15" stroke-linecap="round" stroke-linejoin="round"/>
<path d="M458.0 400.0 C458.3 402.0 458.7 408.0 460.0 412.0 C461.3 416.0 465.0 422.0 466.0 424.0" fill="none" stroke="#4b0d52" stroke-width="1.7" stroke-opacity="0.51" stroke-linecap="round" stroke-linejoin="round"/>
<path d="M310.0 401.0 C311.7 400.2 316.2 397.5 320.0 396.0 C323.8 394.5 328.8 393.2 333.0 392.0 C337.2 390.8 343.0 389.5 345.0 389.0" fill="none" stroke="#8a1a92" stroke-width="4.1" stroke-opacity="0.21" stroke-linecap="round" stroke-linejoin="round"/>
<path d="M310.0 401.0 C311.7 400.2 316.2 397.5 320.0 396.0 C323.8 394.5 328.8 393.2 333.0 392.0 C337.2 390.8 343.0 389.5 345.0 389.0" fill="none" stroke="#4b0d52" stroke-width="2.0" stroke-opacity="0.72" stroke-linecap="round" stroke-linejoin="round"/>
<path d="M312.0 410.0 C313.7 410.5 318.5 412.8 322.0 413.0 C325.5 413.2 330.3 412.3 333.0 411.0 C335.7 409.7 337.2 406.0 338.0 405.0" fill="none" stroke="#8a1a92" stroke-width="4.1" stroke-opacity="0.21" stroke-linecap="round" stroke-linejoin="round"/>
<path d="M312.0 410.0 C313.7 410.5 318.5 412.8 322.0 413.0 C325.5 413.2 330.3 412.3 333.0 411.0 C335.7 409.7 337.2 406.0 338.0 405.0" fill="none" stroke="#4b0d52" stroke-width="2.0" stroke-opacity="0.72" stroke-linecap="round" stroke-linejoin="round"/>
<path d="M330.0 377.0 C331.3 375.5 335.2 371.0 338.0 368.0 C340.8 365.0 344.2 361.0 347.0 359.0 C349.8 357.0 353.7 356.5 355.0 356.0" fill="none" stroke="#8a1a92" stroke-width="4.1" stroke-opacity="0.21" stroke-linecap="round" stroke-linejoin="round"/>
<path d="M330.0 377.0 C331.3 375.5 335.2 371.0 338.0 368.0 C340.8 365.0 344.2 361.0 347.0 359.0 C349.8 357.0 353.7 356.5 355.0 356.0" fill="none" stroke="#4b0d52" stroke-width="2.0" stroke-opacity="0.72" stroke-linecap="round" stroke-linejoin="round"/>
<ellipse cx="335.5" cy="392" rx="7.8" ry="8.5" fill="none" stroke="#4b0d52" stroke-width="1.9" stroke-opacity=".7"/>
<ellipse cx="343.5" cy="389" rx="6" ry="6.5" fill="none" stroke="#3a0b3e" stroke-width="1" stroke-opacity=".45"/>
<path d="M349.0 378.0 C349.8 380.2 352.7 386.5 354.0 391.0 C355.3 395.5 356.5 402.7 357.0 405.0" fill="none" stroke="#8a1a92" stroke-width="3.7" stroke-opacity="0.19" stroke-linecap="round" stroke-linejoin="round"/>
<path d="M349.0 378.0 C349.8 380.2 352.7 386.5 354.0 391.0 C355.3 395.5 356.5 402.7 357.0 405.0" fill="none" stroke="#4b0d52" stroke-width="1.9" stroke-opacity="0.65" stroke-linecap="round" stroke-linejoin="round"/>
<path d="M336.0 415.0 C336.3 417.5 337.8 424.7 338.0 430.0 C338.2 435.3 336.2 441.2 337.0 447.0 C337.8 452.8 342.0 462.0 343.0 465.0" fill="none" stroke="#8a1a92" stroke-width="3.7" stroke-opacity="0.17" stroke-linecap="round" stroke-linejoin="round"/>
<path d="M336.0 415.0 C336.3 417.5 337.8 424.7 338.0 430.0 C338.2 435.3 336.2 441.2 337.0 447.0 C337.8 452.8 342.0 462.0 343.0 465.0" fill="none" stroke="#4b0d52" stroke-width="1.9" stroke-opacity="0.58" stroke-linecap="round" stroke-linejoin="round"/>
<ellipse cx="359.5" cy="428" rx="3.2" ry="5" transform="rotate(-15 359.5 428)" fill="none" stroke="#1a041c" stroke-width="2.6" stroke-opacity=".95"/>
<path d="M361.0 432.0 C361.5 433.3 363.0 439.3 364.0 440.0 C365.0 440.7 366.2 437.7 367.0 436.0 C367.8 434.3 368.7 431.0 369.0 430.0" fill="none" stroke="#1a041c" stroke-width="1.4" stroke-opacity="0.80" stroke-linecap="round" stroke-linejoin="round"/>
<path d="M358.0 433.0 C358.3 434.8 359.5 440.3 360.0 444.0 C360.5 447.7 360.8 453.2 361.0 455.0" fill="none" stroke="#1a041c" stroke-width="1.3" stroke-opacity="0.70" stroke-linecap="round" stroke-linejoin="round"/>
<path d="M374.0 200.0 C374.7 201.3 376.5 205.7 378.0 208.0 C379.5 210.3 381.3 212.0 383.0 214.0 C384.7 216.0 387.2 219.0 388.0 220.0" fill="none" stroke="#1a041c" stroke-width="1.5" stroke-opacity="0.80" stroke-linecap="round" stroke-linejoin="round"/>
<path d="M383.0 203.0 C383.7 204.3 385.7 208.8 387.0 211.0 C388.3 213.2 390.3 215.2 391.0 216.0" fill="none" stroke="#1a041c" stroke-width="1.4" stroke-opacity="0.80" stroke-linecap="round" stroke-linejoin="round"/>
<path d="M389.0 205.0 C389.8 205.8 392.3 208.7 394.0 210.0 C395.7 211.3 398.2 212.5 399.0 213.0" fill="none" stroke="#1a041c" stroke-width="1.3" stroke-opacity="0.75" stroke-linecap="round" stroke-linejoin="round"/>
<path d="M386.0 214.0 C387.0 213.5 390.2 210.8 392.0 211.0 C393.8 211.2 396.2 214.3 397.0 215.0" fill="none" stroke="#1a041c" stroke-width="1.3" stroke-opacity="0.75" stroke-linecap="round" stroke-linejoin="round"/>
<path d="M368.0 190.0 C368.5 191.7 369.7 196.7 371.0 200.0 C372.3 203.3 374.2 207.0 376.0 210.0 C377.8 213.0 381.0 216.7 382.0 218.0" fill="none" stroke="#8a1a92" stroke-width="4.1" stroke-opacity="0.25" stroke-linecap="round" stroke-linejoin="round"/>
<path d="M368.0 190.0 C368.5 191.7 369.7 196.7 371.0 200.0 C372.3 203.3 374.2 207.0 376.0 210.0 C377.8 213.0 381.0 216.7 382.0 218.0" fill="none" stroke="#4b0d52" stroke-width="2.0" stroke-opacity="0.87" stroke-linecap="round" stroke-linejoin="round"/>
<path d="M484.4 120.3 C483.6 122.4 481.9 129.0 479.3 133.0 C476.8 137.0 473.4 140.8 469.2 144.4 C465.0 148.0 456.5 152.9 454.0 154.6" fill="none" stroke="#8a1a92" stroke-width="3.4" stroke-opacity="0.17" stroke-linecap="round" stroke-linejoin="round"/>
<path d="M484.4 120.3 C483.6 122.4 481.9 129.0 479.3 133.0 C476.8 137.0 473.4 140.8 469.2 144.4 C465.0 148.0 456.5 152.9 454.0 154.6" fill="none" stroke="#4b0d52" stroke-width="1.7" stroke-opacity="0.58" stroke-linecap="round" stroke-linejoin="round"/>
<path d="M487.0 130.5 C485.7 132.2 482.7 137.5 479.3 140.6 C476.0 143.8 471.7 146.8 466.7 149.5 C461.6 152.3 451.8 155.9 448.9 157.1" fill="none" stroke="#8a1a92" stroke-width="3.4" stroke-opacity="0.15" stroke-linecap="round" stroke-linejoin="round"/>
<path d="M487.0 130.5 C485.7 132.2 482.7 137.5 479.3 140.6 C476.0 143.8 471.7 146.8 466.7 149.5 C461.6 152.3 451.8 155.9 448.9 157.1" fill="none" stroke="#4b0d52" stroke-width="1.7" stroke-opacity="0.51" stroke-linecap="round" stroke-linejoin="round"/>
<path d="M451.4 145.7 C455.2 146.2 467.5 148.7 474.3 148.8 C481.0 148.8 486.1 147.5 492.0 146.2 C498.0 144.9 506.9 142.0 509.8 141.1" fill="none" stroke="#8a1a92" stroke-width="3.4" stroke-opacity="0.17" stroke-linecap="round" stroke-linejoin="round"/>
<path d="M451.4 145.7 C455.2 146.2 467.5 148.7 474.3 148.8 C481.0 148.8 486.1 147.5 492.0 146.2 C498.0 144.9 506.9 142.0 509.8 141.1" fill="none" stroke="#4b0d52" stroke-width="1.7" stroke-opacity="0.58" stroke-linecap="round" stroke-linejoin="round"/>
<path d="M461.6 154.6 C465.0 154.6 476.0 155.5 481.9 154.9 C487.8 154.2 492.0 152.6 497.1 150.8 C502.2 148.9 509.8 144.9 512.4 143.7" fill="none" stroke="#8a1a92" stroke-width="3.4" stroke-opacity="0.15" stroke-linecap="round" stroke-linejoin="round"/>
<path d="M461.6 154.6 C465.0 154.6 476.0 155.5 481.9 154.9 C487.8 154.2 492.0 152.6 497.1 150.8 C502.2 148.9 509.8 144.9 512.4 143.7" fill="none" stroke="#4b0d52" stroke-width="1.7" stroke-opacity="0.51" stroke-linecap="round" stroke-linejoin="round"/>
<path d="M433.6 176.2 C438.3 174.8 453.1 170.8 461.6 168.1 C470.0 165.3 476.8 162.8 484.4 159.7 C492.0 156.6 503.5 151.2 507.3 149.5" fill="none" stroke="#8a1a92" stroke-width="3.4" stroke-opacity="0.15" stroke-linecap="round" stroke-linejoin="round"/>
<path d="M433.6 176.2 C438.3 174.8 453.1 170.8 461.6 168.1 C470.0 165.3 476.8 162.8 484.4 159.7 C492.0 156.6 503.5 151.2 507.3 149.5" fill="none" stroke="#4b0d52" stroke-width="1.7" stroke-opacity="0.51" stroke-linecap="round" stroke-linejoin="round"/>
<path d="M415.9 197.8 C419.3 195.9 427.7 189.9 436.2 186.3 C444.6 182.7 457.3 178.7 466.7 176.2 C476.0 173.6 487.8 171.9 492.0 171.1" fill="none" stroke="#8a1a92" stroke-width="3.4" stroke-opacity="0.13" stroke-linecap="round" stroke-linejoin="round"/>
<path d="M415.9 197.8 C419.3 195.9 427.7 189.9 436.2 186.3 C444.6 182.7 457.3 178.7 466.7 176.2 C476.0 173.6 487.8 171.9 492.0 171.1" fill="none" stroke="#4b0d52" stroke-width="1.7" stroke-opacity="0.43" stroke-linecap="round" stroke-linejoin="round"/>
<path d="M405.7 207.9 C410.8 205.7 426.0 198.3 436.2 194.5 C446.3 190.7 455.6 187.4 466.7 185.1 C477.7 182.8 496.3 181.5 502.2 180.8" fill="none" stroke="#8a1a92" stroke-width="3.7" stroke-opacity="0.17" stroke-linecap="round" stroke-linejoin="round"/>
<path d="M405.7 207.9 C410.8 205.7 426.0 198.3 436.2 194.5 C446.3 190.7 455.6 187.4 466.7 185.1 C477.7 182.8 496.3 181.5 502.2 180.8" fill="none" stroke="#4b0d52" stroke-width="1.9" stroke-opacity="0.58" stroke-linecap="round" stroke-linejoin="round"/>
<path d="M410.8 221.9 C419.3 219.9 444.6 212.9 461.6 209.7 C478.5 206.5 495.4 204.2 512.4 202.8 C529.3 201.5 546.2 201.0 563.1 201.6 C580.1 202.1 605.5 205.4 613.9 206.1" fill="none" stroke="#8a1a92" stroke-width="3.4" stroke-opacity="0.10" stroke-linecap="round" stroke-linejoin="round"/>
<path d="M410.8 221.9 C419.3 219.9 444.6 212.9 461.6 209.7 C478.5 206.5 495.4 204.2 512.4 202.8 C529.3 201.5 546.2 201.0 563.1 201.6 C580.1 202.1 605.5 205.4 613.9 206.1" fill="none" stroke="#4b0d52" stroke-width="1.7" stroke-opacity="0.36" stroke-linecap="round" stroke-linejoin="round"/>
<path d="M431.1 228.2 C438.3 226.8 458.6 221.7 474.3 219.3 C489.9 217.0 508.1 215.0 525.1 214.3 C542.0 213.5 567.4 214.7 575.8 214.8" fill="none" stroke="#8a1a92" stroke-width="3.4" stroke-opacity="0.08" stroke-linecap="round" stroke-linejoin="round"/>
<path d="M431.1 228.2 C438.3 226.8 458.6 221.7 474.3 219.3 C489.9 217.0 508.1 215.0 525.1 214.3 C542.0 213.5 567.4 214.7 575.8 214.8" fill="none" stroke="#4b0d52" stroke-width="1.7" stroke-opacity="0.29" stroke-linecap="round" stroke-linejoin="round"/>
<path d="M588.5 150.8 C591.1 152.5 598.7 158.3 603.8 160.9 C608.9 163.6 616.5 165.6 619.0 166.5" fill="none" stroke="#8a1a92" stroke-width="3.4" stroke-opacity="0.15" stroke-linecap="round" stroke-linejoin="round"/>
<path d="M588.5 150.8 C591.1 152.5 598.7 158.3 603.8 160.9 C608.9 163.6 616.5 165.6 619.0 166.5" fill="none" stroke="#4b0d52" stroke-width="1.7" stroke-opacity="0.51" stroke-linecap="round" stroke-linejoin="round"/>
<path d="M593.6 159.7 C595.7 161.6 602.1 168.1 606.3 171.1 C610.6 174.1 616.9 176.4 619.0 177.5" fill="none" stroke="#8a1a92" stroke-width="3.4" stroke-opacity="0.13" stroke-linecap="round" stroke-linejoin="round"/>
<path d="M593.6 159.7 C595.7 161.6 602.1 168.1 606.3 171.1 C610.6 174.1 616.9 176.4 619.0 177.5" fill="none" stroke="#4b0d52" stroke-width="1.7" stroke-opacity="0.43" stroke-linecap="round" stroke-linejoin="round"/>
<path d="M553.0 163.5 C556.8 164.5 567.4 168.4 575.8 169.8 C584.3 171.3 599.1 171.9 603.8 172.4" fill="none" stroke="#8a1a92" stroke-width="3.4" stroke-opacity="0.10" stroke-linecap="round" stroke-linejoin="round"/>
<path d="M553.0 163.5 C556.8 164.5 567.4 168.4 575.8 169.8 C584.3 171.3 599.1 171.9 603.8 172.4" fill="none" stroke="#4b0d52" stroke-width="1.7" stroke-opacity="0.36" stroke-linecap="round" stroke-linejoin="round"/>
<path d="M527.6 135.6 C531.8 134.0 543.7 129.0 553.0 126.4 C562.3 123.8 573.3 121.7 583.5 119.8 C593.6 117.9 608.9 116.0 613.9 115.2" fill="none" stroke="#8a1a92" stroke-width="4.1" stroke-opacity="0.17" stroke-linecap="round" stroke-linejoin="round"/>
<path d="M527.6 135.6 C531.8 134.0 543.7 129.0 553.0 126.4 C562.3 123.8 573.3 121.7 583.5 119.8 C593.6 117.9 608.9 116.0 613.9 115.2" fill="none" stroke="#4b0d52" stroke-width="2.0" stroke-opacity="0.58" stroke-linecap="round" stroke-linejoin="round"/>
<path d="M525.1 140.6 C531.4 138.9 550.0 133.1 563.1 130.0 C576.3 126.8 597.0 123.0 603.8 121.6" fill="none" stroke="#8a1a92" stroke-width="3.4" stroke-opacity="0.13" stroke-linecap="round" stroke-linejoin="round"/>
<path d="M525.1 140.6 C531.4 138.9 550.0 133.1 563.1 130.0 C576.3 126.8 597.0 123.0 603.8 121.6" fill="none" stroke="#4b0d52" stroke-width="1.7" stroke-opacity="0.43" stroke-linecap="round" stroke-linejoin="round"/>
<path d="M367.6 191.4 C368.0 194.0 368.9 201.6 370.2 206.7 C371.4 211.7 373.5 217.2 375.2 221.9 C376.9 226.5 379.5 232.5 380.3 234.6" fill="none" stroke="#8a1a92" stroke-width="4.1" stroke-opacity="0.21" stroke-linecap="round" stroke-linejoin="round"/>
<path d="M367.6 191.4 C368.0 194.0 368.9 201.6 370.2 206.7 C371.4 211.7 373.5 217.2 375.2 221.9 C376.9 226.5 379.5 232.5 380.3 234.6" fill="none" stroke="#4b0d52" stroke-width="2.0" stroke-opacity="0.72" stroke-linecap="round" stroke-linejoin="round"/>
<path d="M371.4 188.9 C372.1 191.4 373.5 199.0 375.2 204.1 C376.9 209.2 380.5 216.8 381.6 219.3" fill="none" stroke="#8a1a92" stroke-width="3.7" stroke-opacity="0.19" stroke-linecap="round" stroke-linejoin="round"/>
<path d="M371.4 188.9 C372.1 191.4 373.5 199.0 375.2 204.1 C376.9 209.2 380.5 216.8 381.6 219.3" fill="none" stroke="#4b0d52" stroke-width="1.9" stroke-opacity="0.65" stroke-linecap="round" stroke-linejoin="round"/>
<path d="M390.5 196.5 C391.7 195.2 394.7 192.3 398.1 188.9 C401.5 185.5 406.1 180.8 410.8 176.2 C415.4 171.5 423.5 163.5 426.0 160.9" fill="none" stroke="#8a1a92" stroke-width="3.7" stroke-opacity="0.17" stroke-linecap="round" stroke-linejoin="round"/>
<path d="M390.5 196.5 C391.7 195.2 394.7 192.3 398.1 188.9 C401.5 185.5 406.1 180.8 410.8 176.2 C415.4 171.5 423.5 163.5 426.0 160.9" fill="none" stroke="#4b0d52" stroke-width="1.9" stroke-opacity="0.58" stroke-linecap="round" stroke-linejoin="round"/>
<path d="M395.6 201.6 C397.2 199.5 401.5 193.5 405.7 188.9 C409.9 184.2 418.4 176.2 420.9 173.6" fill="none" stroke="#8a1a92" stroke-width="3.4" stroke-opacity="0.15" stroke-linecap="round" stroke-linejoin="round"/>
<path d="M395.6 201.6 C397.2 199.5 401.5 193.5 405.7 188.9 C409.9 184.2 418.4 176.2 420.9 173.6" fill="none" stroke="#4b0d52" stroke-width="1.7" stroke-opacity="0.51" stroke-linecap="round" stroke-linejoin="round"/>
<path d="M383.9 170.2 C383.2 171.5 381.0 175.2 379.8 178.0 C378.7 180.9 377.6 184.1 377.0 187.1 C376.3 190.1 376.0 193.3 376.1 196.1 C376.2 198.8 376.7 201.1 377.6 203.6 C378.4 206.1 379.7 208.4 381.3 211.1 C382.9 213.9 385.8 216.9 387.3 220.2 C388.8 223.4 389.8 228.9 390.3 230.7" fill="none" stroke="#2a0830" stroke-width="2.4" stroke-opacity="0.90" stroke-linecap="round" stroke-linejoin="round"/>
<path d="M385.1 170.5 C385.1 172.0 385.3 176.3 385.2 179.5 C385.1 182.8 384.7 186.8 384.5 190.1 C384.2 193.3 383.2 196.1 383.6 199.1 C383.9 202.1 385.4 205.8 386.6 208.1 C387.7 210.4 389.8 212.1 390.5 212.9" fill="none" stroke="#2a0830" stroke-width="2.2" stroke-opacity="0.85" stroke-linecap="round" stroke-linejoin="round"/>
<path d="M367.0 187.1 C366.5 188.3 364.1 191.6 364.0 194.6 C363.9 197.6 365.0 201.4 366.3 205.1 C367.5 208.9 369.7 213.4 371.5 217.1 C373.4 220.9 375.8 224.0 377.6 227.7 C379.3 231.3 381.3 237.1 382.1 238.9" fill="none" stroke="#8a1a92" stroke-width="4.8" stroke-opacity="0.29" stroke-linecap="round" stroke-linejoin="round"/>
<path d="M367.0 187.1 C366.5 188.3 364.1 191.6 364.0 194.6 C363.9 197.6 365.0 201.4 366.3 205.1 C367.5 208.9 369.7 213.4 371.5 217.1 C373.4 220.9 375.8 224.0 377.6 227.7 C379.3 231.3 381.3 237.1 382.1 238.9" fill="none" stroke="#4b0d52" stroke-width="2.4" stroke-opacity="1.00" stroke-linecap="round" stroke-linejoin="round"/>
<path d="M370.0 188.9 C369.9 190.3 368.8 194.1 369.3 197.6 C369.8 201.1 371.4 205.9 373.0 209.6 C374.7 213.4 377.1 216.6 379.1 220.2 C381.1 223.7 384.1 228.9 385.1 230.7" fill="none" stroke="#8a1a92" stroke-width="4.1" stroke-opacity="0.25" stroke-linecap="round" stroke-linejoin="round"/>
<path d="M370.0 188.9 C369.9 190.3 368.8 194.1 369.3 197.6 C369.8 201.1 371.4 205.9 373.0 209.6 C374.7 213.4 377.1 216.6 379.1 220.2 C381.1 223.7 384.1 228.9 385.1 230.7" fill="none" stroke="#4b0d52" stroke-width="2.0" stroke-opacity="0.87" stroke-linecap="round" stroke-linejoin="round"/>
<path d="M387.3 205.1 C388.2 206.1 390.5 209.8 392.6 211.1 C394.7 212.4 397.8 212.9 400.1 212.9 C402.4 212.9 405.4 211.4 406.4 211.1" fill="none" stroke="#2a0830" stroke-width="2.1" stroke-opacity="0.80" stroke-linecap="round" stroke-linejoin="round"/>
<path d="M391.1 203.6 C391.6 204.6 393.1 207.6 394.4 209.6 C395.7 211.6 397.6 213.8 398.6 215.6 C399.6 217.4 400.1 219.6 400.4 220.5" fill="none" stroke="#2a0830" stroke-width="2.0" stroke-opacity="0.80" stroke-linecap="round" stroke-linejoin="round"/>
<path d="M395.9 212.6 C396.2 213.9 397.4 217.6 397.4 220.2 C397.4 222.7 396.7 225.2 395.9 227.7 C395.2 230.2 393.4 233.9 392.9 235.2" fill="none" stroke="#2a0830" stroke-width="2.0" stroke-opacity="0.75" stroke-linecap="round" stroke-linejoin="round"/>
<path d="M400.1 212.9 C400.6 213.8 403.1 215.9 403.1 217.9 C403.1 219.8 401.0 222.3 400.1 224.7 C399.2 227.0 398.4 229.7 397.9 232.2 C397.4 234.7 397.2 238.4 397.1 239.7" fill="none" stroke="#2a0830" stroke-width="1.8" stroke-opacity="0.70" stroke-linecap="round" stroke-linejoin="round"/>
<path d="M379.1 205.1 C379.7 207.1 381.4 213.4 382.8 217.1 C384.2 220.9 386.3 223.9 387.3 227.7 C388.3 231.4 388.6 237.7 388.8 239.7" fill="none" stroke="#8a1a92" stroke-width="4.4" stroke-opacity="0.25" stroke-linecap="round" stroke-linejoin="round"/>
<path d="M379.1 205.1 C379.7 207.1 381.4 213.4 382.8 217.1 C384.2 220.9 386.3 223.9 387.3 227.7 C388.3 231.4 388.6 237.7 388.8 239.7" fill="none" stroke="#4b0d52" stroke-width="2.2" stroke-opacity="0.87" stroke-linecap="round" stroke-linejoin="round"/>
<path d="M330.1 376.7 C331.8 375.0 336.4 370.1 340.8 366.8 C345.1 363.5 353.7 358.6 356.3 356.9" fill="none" stroke="#8a1a92" stroke-width="4.4" stroke-opacity="0.25" stroke-linecap="round" stroke-linejoin="round"/>
<path d="M330.1 376.7 C331.8 375.0 336.4 370.1 340.8 366.8 C345.1 363.5 353.7 358.6 356.3 356.9" fill="none" stroke="#4b0d52" stroke-width="2.2" stroke-opacity="0.87" stroke-linecap="round" stroke-linejoin="round"/>
<path d="M350.6 377.2 C351.4 376.0 353.8 372.3 355.4 369.6 C357.1 367.0 359.7 362.8 360.5 361.4" fill="none" stroke="#8a1a92" stroke-width="4.1" stroke-opacity="0.23" stroke-linecap="round" stroke-linejoin="round"/>
<path d="M350.6 377.2 C351.4 376.0 353.8 372.3 355.4 369.6 C357.1 367.0 359.7 362.8 360.5 361.4" fill="none" stroke="#4b0d52" stroke-width="2.0" stroke-opacity="0.80" stroke-linecap="round" stroke-linejoin="round"/>
<path d="M318.2 399.2 C320.6 400.5 328.9 406.1 332.3 406.6 C335.7 407.0 337.5 402.8 338.5 402.1" fill="none" stroke="#8a1a92" stroke-width="4.1" stroke-opacity="0.23" stroke-linecap="round" stroke-linejoin="round"/>
<path d="M318.2 399.2 C320.6 400.5 328.9 406.1 332.3 406.6 C335.7 407.0 337.5 402.8 338.5 402.1" fill="none" stroke="#4b0d52" stroke-width="2.0" stroke-opacity="0.80" stroke-linecap="round" stroke-linejoin="round"/>
<path d="M311.2 410.5 C312.8 411.4 317.5 415.0 321.0 415.6 C324.6 416.2 330.4 414.2 332.3 413.9" fill="none" stroke="#8a1a92" stroke-width="4.4" stroke-opacity="0.25" stroke-linecap="round" stroke-linejoin="round"/>
<path d="M311.2 410.5 C312.8 411.4 317.5 415.0 321.0 415.6 C324.6 416.2 330.4 414.2 332.3 413.9" fill="none" stroke="#4b0d52" stroke-width="2.2" stroke-opacity="0.87" stroke-linecap="round" stroke-linejoin="round"/>
<path d="M332.3 413.3 C333.0 416.6 335.4 426.5 336.5 433.1 C337.7 439.7 338.0 446.3 339.4 452.8 C340.8 459.4 344.1 469.3 345.0 472.6" fill="none" stroke="#8a1a92" stroke-width="4.4" stroke-opacity="0.23" stroke-linecap="round" stroke-linejoin="round"/>
<path d="M332.3 413.3 C333.0 416.6 335.4 426.5 336.5 433.1 C337.7 439.7 338.0 446.3 339.4 452.8 C340.8 459.4 344.1 469.3 345.0 472.6" fill="none" stroke="#4b0d52" stroke-width="2.2" stroke-opacity="0.80" stroke-linecap="round" stroke-linejoin="round"/>
<path d="M354.9 410.5 C355.4 411.9 357.0 416.2 357.7 419.0 C358.4 421.8 358.9 426.0 359.1 427.4" fill="none" stroke="#8a1a92" stroke-width="4.1" stroke-opacity="0.21" stroke-linecap="round" stroke-linejoin="round"/>
<path d="M354.9 410.5 C355.4 411.9 357.0 416.2 357.7 419.0 C358.4 421.8 358.9 426.0 359.1 427.4" fill="none" stroke="#4b0d52" stroke-width="2.0" stroke-opacity="0.72" stroke-linecap="round" stroke-linejoin="round"/>
<path d="M350.6 433.1 C349.9 434.3 348.1 437.8 346.4 440.1 C344.8 442.5 341.7 446.0 340.8 447.2" fill="none" stroke="#8a1a92" stroke-width="3.7" stroke-opacity="0.19" stroke-linecap="round" stroke-linejoin="round"/>
<path d="M350.6 433.1 C349.9 434.3 348.1 437.8 346.4 440.1 C344.8 442.5 341.7 446.0 340.8 447.2" fill="none" stroke="#4b0d52" stroke-width="1.9" stroke-opacity="0.65" stroke-linecap="round" stroke-linejoin="round"/>
<path d="M364.8 430.3 C367.8 431.0 375.8 433.8 383.1 434.5 C390.4 435.2 399.5 435.2 408.5 434.5 C417.4 433.8 427.3 431.9 436.7 430.3 C446.1 428.6 456.2 425.1 464.9 424.6 C473.6 424.2 484.9 427.0 488.9 427.4" fill="none" stroke="#8a1a92" stroke-width="5.1" stroke-opacity="0.25" stroke-linecap="round" stroke-linejoin="round"/>
<path d="M364.8 430.3 C367.8 431.0 375.8 433.8 383.1 434.5 C390.4 435.2 399.5 435.2 408.5 434.5 C417.4 433.8 427.3 431.9 436.7 430.3 C446.1 428.6 456.2 425.1 464.9 424.6 C473.6 424.2 484.9 427.0 488.9 427.4" fill="none" stroke="#4b0d52" stroke-width="2.5" stroke-opacity="0.87" stroke-linecap="round" stroke-linejoin="round"/>
<path d="M374.6 438.7 C378.4 440.1 390.6 444.8 397.2 447.2 C403.8 449.5 407.5 451.4 414.1 452.8 C420.7 454.2 429.2 453.8 436.7 455.7 C444.2 457.5 455.5 462.7 459.3 464.1" fill="none" stroke="#8a1a92" stroke-width="4.1" stroke-opacity="0.19" stroke-linecap="round" stroke-linejoin="round"/>
<path d="M374.6 438.7 C378.4 440.1 390.6 444.8 397.2 447.2 C403.8 449.5 407.5 451.4 414.1 452.8 C420.7 454.2 429.2 453.8 436.7 455.7 C444.2 457.5 455.5 462.7 459.3 464.1" fill="none" stroke="#4b0d52" stroke-width="2.0" stroke-opacity="0.65" stroke-linecap="round" stroke-linejoin="round"/>
<path d="M374.6 435.9 C374.2 437.8 373.6 442.0 371.8 447.2 C370.0 452.4 366.3 461.8 363.9 466.9 C361.6 472.1 358.7 476.3 357.7 478.2" fill="none" stroke="#8a1a92" stroke-width="4.1" stroke-opacity="0.21" stroke-linecap="round" stroke-linejoin="round"/>
<path d="M374.6 435.9 C374.2 437.8 373.6 442.0 371.8 447.2 C370.0 452.4 366.3 461.8 363.9 466.9 C361.6 472.1 358.7 476.3 357.7 478.2" fill="none" stroke="#4b0d52" stroke-width="2.0" stroke-opacity="0.72" stroke-linecap="round" stroke-linejoin="round"/>
<path d="M414.1 438.7 C415.1 440.1 419.3 443.4 419.8 447.2 C420.2 451.0 417.4 458.9 416.9 461.3" fill="none" stroke="#8a1a92" stroke-width="3.7" stroke-opacity="0.19" stroke-linecap="round" stroke-linejoin="round"/>
<path d="M414.1 438.7 C415.1 440.1 419.3 443.4 419.8 447.2 C420.2 451.0 417.4 458.9 416.9 461.3" fill="none" stroke="#4b0d52" stroke-width="1.9" stroke-opacity="0.65" stroke-linecap="round" stroke-linejoin="round"/>
<path d="M448.0 424.6 C449.4 427.0 454.5 435.3 456.4 438.7 C458.4 442.1 459.3 443.9 459.8 444.9" fill="none" stroke="#8a1a92" stroke-width="3.7" stroke-opacity="0.19" stroke-linecap="round" stroke-linejoin="round"/>
<path d="M448.0 424.6 C449.4 427.0 454.5 435.3 456.4 438.7 C458.4 442.1 459.3 443.9 459.8 444.9" fill="none" stroke="#4b0d52" stroke-width="1.9" stroke-opacity="0.65" stroke-linecap="round" stroke-linejoin="round"/>
<path d="M464.9 396.4 C465.8 399.2 467.7 408.2 470.5 413.3 C473.4 418.5 479.9 425.1 481.8 427.4" fill="none" stroke="#8a1a92" stroke-width="4.1" stroke-opacity="0.19" stroke-linecap="round" stroke-linejoin="round"/>
<path d="M464.9 396.4 C465.8 399.2 467.7 408.2 470.5 413.3 C473.4 418.5 479.9 425.1 481.8 427.4" fill="none" stroke="#4b0d52" stroke-width="2.0" stroke-opacity="0.65" stroke-linecap="round" stroke-linejoin="round"/>
<path d="M456.4 400.6 C457.4 403.2 459.7 412.2 462.1 416.2 C464.4 420.2 469.1 423.2 470.5 424.6" fill="none" stroke="#8a1a92" stroke-width="3.7" stroke-opacity="0.17" stroke-linecap="round" stroke-linejoin="round"/>
<path d="M456.4 400.6 C457.4 403.2 459.7 412.2 462.1 416.2 C464.4 420.2 469.1 423.2 470.5 424.6" fill="none" stroke="#4b0d52" stroke-width="1.9" stroke-opacity="0.58" stroke-linecap="round" stroke-linejoin="round"/>
<path d="M393.0 340.0 C391.8 344.2 389.0 357.6 385.9 365.4 C382.9 373.1 378.6 379.7 374.6 386.5 C370.6 393.4 364.0 403.0 361.9 406.3" fill="none" stroke="#8a1a92" stroke-width="4.8" stroke-opacity="0.25" stroke-linecap="round" stroke-linejoin="round"/>
<path d="M393.0 340.0 C391.8 344.2 389.0 357.6 385.9 365.4 C382.9 373.1 378.6 379.7 374.6 386.5 C370.6 393.4 364.0 403.0 361.9 406.3" fill="none" stroke="#4b0d52" stroke-width="2.4" stroke-opacity="0.87" stroke-linecap="round" stroke-linejoin="round"/>
<path d="M400.0 348.5 C398.8 352.7 395.8 365.9 393.0 373.9 C390.1 381.8 386.6 389.4 383.1 396.4 C379.6 403.5 373.7 412.9 371.8 416.2" fill="none" stroke="#8a1a92" stroke-width="4.1" stroke-opacity="0.19" stroke-linecap="round" stroke-linejoin="round"/>
<path d="M400.0 348.5 C398.8 352.7 395.8 365.9 393.0 373.9 C390.1 381.8 386.6 389.4 383.1 396.4 C379.6 403.5 373.7 412.9 371.8 416.2" fill="none" stroke="#4b0d52" stroke-width="2.0" stroke-opacity="0.65" stroke-linecap="round" stroke-linejoin="round"/>
<path d="M408.5 345.6 C407.3 351.3 404.2 368.7 401.4 379.5 C398.6 390.3 393.9 403.0 391.6 410.5 C389.2 418.0 388.0 422.3 387.3 424.6" fill="none" stroke="#8a1a92" stroke-width="4.1" stroke-opacity="0.21" stroke-linecap="round" stroke-linejoin="round"/>
<path d="M408.5 345.6 C407.3 351.3 404.2 368.7 401.4 379.5 C398.6 390.3 393.9 403.0 391.6 410.5 C389.2 418.0 388.0 422.3 387.3 424.6" fill="none" stroke="#4b0d52" stroke-width="2.0" stroke-opacity="0.72" stroke-linecap="round" stroke-linejoin="round"/>
<path d="M400.0 472.0 C402.5 471.7 410.8 471.0 415.0 470.0 C419.2 469.0 422.2 467.5 425.0 466.0 C427.8 464.5 429.0 462.0 432.0 461.0 C435.0 460.0 440.0 459.5 443.0 460.0 C446.0 460.5 448.0 462.4 450.0 464.0 C452.0 465.6 453.2 467.7 455.0 469.5 C456.8 471.3 459.2 473.4 461.0 475.0 C462.8 476.6 465.2 478.3 466.0 479.0" fill="none" stroke="#8a1a92" stroke-width="4.8" stroke-opacity="0.25" stroke-linecap="round" stroke-linejoin="round"/>
<path d="M400.0 472.0 C402.5 471.7 410.8 471.0 415.0 470.0 C419.2 469.0 422.2 467.5 425.0 466.0 C427.8 464.5 429.0 462.0 432.0 461.0 C435.0 460.0 440.0 459.5 443.0 460.0 C446.0 460.5 448.0 462.4 450.0 464.0 C452.0 465.6 453.2 467.7 455.0 469.5 C456.8 471.3 459.2 473.4 461.0 475.0 C462.8 476.6 465.2 478.3 466.0 479.0" fill="none" stroke="#4b0d52" stroke-width="2.4" stroke-opacity="0.87" stroke-linecap="round" stroke-linejoin="round"/>
<path d="M418.0 474.0 C419.7 473.0 425.3 470.0 428.0 468.0 C430.7 466.0 433.0 463.0 434.0 462.0" fill="none" stroke="#8a1a92" stroke-width="3.7" stroke-opacity="0.19" stroke-linecap="round" stroke-linejoin="round"/>
<path d="M418.0 474.0 C419.7 473.0 425.3 470.0 428.0 468.0 C430.7 466.0 433.0 463.0 434.0 462.0" fill="none" stroke="#4b0d52" stroke-width="1.9" stroke-opacity="0.65" stroke-linecap="round" stroke-linejoin="round"/>
<path d="M541.9 362.4 C537.9 364.3 526.9 368.1 517.8 373.8 C508.7 379.5 494.9 388.6 487.3 396.7 C479.7 404.7 474.6 417.8 472.0 422.0" fill="none" stroke="#8a1a92" stroke-width="3.7" stroke-opacity="0.17" stroke-linecap="round" stroke-linejoin="round"/>
<path d="M541.9 362.4 C537.9 364.3 526.9 368.1 517.8 373.8 C508.7 379.5 494.9 388.6 487.3 396.7 C479.7 404.7 474.6 417.8 472.0 422.0" fill="none" stroke="#4b0d52" stroke-width="1.9" stroke-opacity="0.58" stroke-linecap="round" stroke-linejoin="round"/>
<path d="M536.8 364.1 C531.5 366.4 514.2 372.6 505.1 377.6 C496.0 382.6 486.0 391.4 482.2 394.1" fill="none" stroke="#8a1a92" stroke-width="3.4" stroke-opacity="0.15" stroke-linecap="round" stroke-linejoin="round"/>
<path d="M536.8 364.1 C531.5 366.4 514.2 372.6 505.1 377.6 C496.0 382.6 486.0 391.4 482.2 394.1" fill="none" stroke="#4b0d52" stroke-width="1.7" stroke-opacity="0.51" stroke-linecap="round" stroke-linejoin="round"/>
<path d="M416.2 348.4 C414.9 352.6 411.1 364.9 408.6 373.8 C406.0 382.7 402.2 397.1 400.9 401.7" fill="none" stroke="#8a1a92" stroke-width="3.7" stroke-opacity="0.17" stroke-linecap="round" stroke-linejoin="round"/>
<path d="M416.2 348.4 C414.9 352.6 411.1 364.9 408.6 373.8 C406.0 382.7 402.2 397.1 400.9 401.7" fill="none" stroke="#4b0d52" stroke-width="1.9" stroke-opacity="0.58" stroke-linecap="round" stroke-linejoin="round"/>
<path d="M423.8 350.9 C422.5 353.5 418.3 360.3 416.2 366.2 C414.1 372.1 411.9 383.1 411.1 386.5" fill="none" stroke="#8a1a92" stroke-width="3.4" stroke-opacity="0.15" stroke-linecap="round" stroke-linejoin="round"/>
<path d="M423.8 350.9 C422.5 353.5 418.3 360.3 416.2 366.2 C414.1 372.1 411.9 383.1 411.1 386.5" fill="none" stroke="#4b0d52" stroke-width="1.7" stroke-opacity="0.51" stroke-linecap="round" stroke-linejoin="round"/>
<path d="M482.2 344.6 C486.0 345.7 497.4 349.0 505.1 350.9 C512.7 352.9 524.1 355.6 527.9 356.5" fill="none" stroke="#8a1a92" stroke-width="3.4" stroke-opacity="0.13" stroke-linecap="round" stroke-linejoin="round"/>
<path d="M482.2 344.6 C486.0 345.7 497.4 349.0 505.1 350.9 C512.7 352.9 524.1 355.6 527.9 356.5" fill="none" stroke="#4b0d52" stroke-width="1.7" stroke-opacity="0.43" stroke-linecap="round" stroke-linejoin="round"/>
<path d="M552.6 234.8 C548.9 240.6 534.9 258.7 530.3 269.9 C525.6 281.1 524.1 291.2 524.5 301.9 C524.9 312.5 529.2 325.2 532.8 333.9 C536.4 342.5 544.0 350.4 546.2 353.7" fill="none" stroke="#8a1a92" stroke-width="4.1" stroke-opacity="0.19" stroke-linecap="round" stroke-linejoin="round"/>
<path d="M552.6 234.8 C548.9 240.6 534.9 258.7 530.3 269.9 C525.6 281.1 524.1 291.2 524.5 301.9 C524.9 312.5 529.2 325.2 532.8 333.9 C536.4 342.5 544.0 350.4 546.2 353.7" fill="none" stroke="#4b0d52" stroke-width="2.0" stroke-opacity="0.65" stroke-linecap="round" stroke-linejoin="round"/>
<path d="M539.8 247.5 C536.6 252.9 524.8 269.4 520.7 279.5 C516.5 289.6 514.1 298.7 514.9 308.3 C515.7 317.9 523.7 332.3 525.5 337.1" fill="none" stroke="#8a1a92" stroke-width="3.7" stroke-opacity="0.17" stroke-linecap="round" stroke-linejoin="round"/>
<path d="M539.8 247.5 C536.6 252.9 524.8 269.4 520.7 279.5 C516.5 289.6 514.1 298.7 514.9 308.3 C515.7 317.9 523.7 332.3 525.5 337.1" fill="none" stroke="#4b0d52" stroke-width="1.9" stroke-opacity="0.58" stroke-linecap="round" stroke-linejoin="round"/>
<path d="M507.9 282.7 C506.9 287.0 501.1 299.8 502.1 308.3 C503.2 316.8 509.6 326.9 514.3 333.9 C519.0 340.8 527.6 347.2 530.3 349.8" fill="none" stroke="#8a1a92" stroke-width="3.4" stroke-opacity="0.15" stroke-linecap="round" stroke-linejoin="round"/>
<path d="M507.9 282.7 C506.9 287.0 501.1 299.8 502.1 308.3 C503.2 316.8 509.6 326.9 514.3 333.9 C519.0 340.8 527.6 347.2 530.3 349.8" fill="none" stroke="#4b0d52" stroke-width="1.7" stroke-opacity="0.51" stroke-linecap="round" stroke-linejoin="round"/>
<path d="M498.3 285.9 C498.7 288.3 499.7 295.8 500.8 300.3 C502.0 304.8 504.6 311.0 505.3 313.1" fill="none" stroke="#8a1a92" stroke-width="3.4" stroke-opacity="0.13" stroke-linecap="round" stroke-linejoin="round"/>
<path d="M498.3 285.9 C498.7 288.3 499.7 295.8 500.8 300.3 C502.0 304.8 504.6 311.0 505.3 313.1" fill="none" stroke="#4b0d52" stroke-width="1.7" stroke-opacity="0.43" stroke-linecap="round" stroke-linejoin="round"/>
<path d="M546.2 253.9 C544.4 259.3 537.3 276.3 535.1 285.9 C532.8 295.5 533.2 307.2 532.8 311.5" fill="none" stroke="#8a1a92" stroke-width="3.4" stroke-opacity="0.15" stroke-linecap="round" stroke-linejoin="round"/>
<path d="M546.2 253.9 C544.4 259.3 537.3 276.3 535.1 285.9 C532.8 295.5 533.2 307.2 532.8 311.5" fill="none" stroke="#4b0d52" stroke-width="1.7" stroke-opacity="0.51" stroke-linecap="round" stroke-linejoin="round"/>
<path d="M399.2 228.4 C400.2 230.5 403.4 236.9 405.6 241.2 C407.7 245.4 410.9 251.8 412.0 253.9" fill="none" stroke="#8a1a92" stroke-width="3.7" stroke-opacity="0.17" stroke-linecap="round" stroke-linejoin="round"/>
<path d="M399.2 228.4 C400.2 230.5 403.4 236.9 405.6 241.2 C407.7 245.4 410.9 251.8 412.0 253.9" fill="none" stroke="#4b0d52" stroke-width="1.9" stroke-opacity="0.58" stroke-linecap="round" stroke-linejoin="round"/>
<path d="M402.4 253.9 C403.3 256.1 406.3 262.5 408.1 266.7 C410.0 271.0 412.7 277.4 413.6 279.5" fill="none" stroke="#8a1a92" stroke-width="3.7" stroke-opacity="0.17" stroke-linecap="round" stroke-linejoin="round"/>
<path d="M402.4 253.9 C403.3 256.1 406.3 262.5 408.1 266.7 C410.0 271.0 412.7 277.4 413.6 279.5" fill="none" stroke="#4b0d52" stroke-width="1.9" stroke-opacity="0.58" stroke-linecap="round" stroke-linejoin="round"/>
<path d="M405.6 285.9 C406.4 288.0 408.8 294.4 410.4 298.7 C412.0 303.0 414.4 309.4 415.2 311.5" fill="none" stroke="#8a1a92" stroke-width="3.7" stroke-opacity="0.17" stroke-linecap="round" stroke-linejoin="round"/>
<path d="M405.6 285.9 C406.4 288.0 408.8 294.4 410.4 298.7 C412.0 303.0 414.4 309.4 415.2 311.5" fill="none" stroke="#4b0d52" stroke-width="1.9" stroke-opacity="0.58" stroke-linecap="round" stroke-linejoin="round"/>
<path d="M410.4 238.0 C411.2 239.8 413.7 245.7 415.2 249.1 C416.6 252.6 418.4 257.1 419.0 258.7" fill="none" stroke="#8a1a92" stroke-width="3.4" stroke-opacity="0.13" stroke-linecap="round" stroke-linejoin="round"/>
<path d="M410.4 238.0 C411.2 239.8 413.7 245.7 415.2 249.1 C416.6 252.6 418.4 257.1 419.0 258.7" fill="none" stroke="#4b0d52" stroke-width="1.7" stroke-opacity="0.43" stroke-linecap="round" stroke-linejoin="round"/>
<path d="M412.0 218.8 C420.0 217.2 441.3 211.8 459.9 209.2 C478.6 206.5 507.3 204.4 523.9 202.8 C540.4 201.2 553.2 200.1 559.0 199.6" fill="none" stroke="#8a1a92" stroke-width="3.7" stroke-opacity="0.15" stroke-linecap="round" stroke-linejoin="round"/>
<path d="M412.0 218.8 C420.0 217.2 441.3 211.8 459.9 209.2 C478.6 206.5 507.3 204.4 523.9 202.8 C540.4 201.2 553.2 200.1 559.0 199.6" fill="none" stroke="#4b0d52" stroke-width="1.9" stroke-opacity="0.51" stroke-linecap="round" stroke-linejoin="round"/>
<path d="M418.4 225.2 C428.0 223.6 455.7 218.2 475.9 215.6 C496.2 212.9 529.2 210.2 539.8 209.2" fill="none" stroke="#8a1a92" stroke-width="3.4" stroke-opacity="0.13" stroke-linecap="round" stroke-linejoin="round"/>
<path d="M418.4 225.2 C428.0 223.6 455.7 218.2 475.9 215.6 C496.2 212.9 529.2 210.2 539.8 209.2" fill="none" stroke="#4b0d52" stroke-width="1.7" stroke-opacity="0.43" stroke-linecap="round" stroke-linejoin="round"/>
<path d="M399.2 222.0 C406.6 219.9 428.5 212.9 443.9 209.8 C459.4 206.7 483.9 204.5 491.9 203.4" fill="none" stroke="#8a1a92" stroke-width="3.7" stroke-opacity="0.15" stroke-linecap="round" stroke-linejoin="round"/>
<path d="M399.2 222.0 C406.6 219.9 428.5 212.9 443.9 209.8 C459.4 206.7 483.9 204.5 491.9 203.4" fill="none" stroke="#4b0d52" stroke-width="1.9" stroke-opacity="0.51" stroke-linecap="round" stroke-linejoin="round"/>
<path d="M391.0 214.0 C391.5 220.0 392.7 237.3 394.0 250.0 C395.3 262.7 397.2 278.3 399.0 290.0 C400.8 301.7 403.3 312.7 405.0 320.0 C406.7 327.3 408.3 331.7 409.0 334.0" fill="none" stroke="#2a0830" stroke-width="2.2" stroke-opacity="0.75" stroke-linecap="round" stroke-linejoin="round"/>
<path d="M386.5 216.0 C386.8 221.7 387.5 237.7 388.5 250.0 C389.5 262.3 390.9 278.3 392.5 290.0 C394.1 301.7 396.1 312.3 398.0 320.0 C399.9 327.7 403.0 333.3 404.0 336.0" fill="none" stroke="#2a0830" stroke-width="1.8" stroke-opacity="0.60" stroke-linecap="round" stroke-linejoin="round"/>
<path d="M407.5 341.0 C405.4 345.0 399.6 356.5 395.0 365.0 C390.4 373.5 384.5 384.2 380.0 392.0 C375.5 399.8 371.3 406.7 368.0 412.0 C364.7 417.3 361.3 422.0 360.0 424.0" fill="none" stroke="#2a0830" stroke-width="2.2" stroke-opacity="0.70" stroke-linecap="round" stroke-linejoin="round"/>
<path d="M403.0 341.0 C400.7 344.8 393.8 356.2 389.0 364.0 C384.2 371.8 378.5 381.0 374.0 388.0 C369.5 395.0 364.0 403.0 362.0 406.0" fill="none" stroke="#2a0830" stroke-width="1.6" stroke-opacity="0.50" stroke-linecap="round" stroke-linejoin="round"/>
<path d="M364.5 430.0 C367.6 430.8 375.8 433.8 383.0 434.5 C390.2 435.2 399.0 435.2 408.0 434.5 C417.0 433.8 427.5 431.7 437.0 430.0 C446.5 428.3 456.3 424.9 465.0 424.5 C473.7 424.1 485.0 427.0 489.0 427.5" fill="none" stroke="#2a0830" stroke-width="1.6" stroke-opacity="0.50" stroke-linecap="round" stroke-linejoin="round"/>
<path d="M413.0 337.0 C417.5 337.3 428.9 338.2 440.0 339.0 C451.1 339.8 468.0 340.7 479.7 342.0 C491.4 343.3 500.8 345.0 510.0 347.0 C519.2 349.0 528.5 352.0 535.0 354.0 C541.5 356.0 546.7 358.2 549.0 359.0" fill="none" stroke="#2a0830" stroke-width="1.8" stroke-opacity="0.45" stroke-linecap="round" stroke-linejoin="round"/>
<path d="M398.0 212.0 C402.5 208.3 414.4 197.7 425.0 190.0 C435.6 182.3 450.8 172.7 461.6 166.0 C472.4 159.3 480.7 154.4 490.0 150.0 C499.3 145.6 512.8 141.3 517.4 139.6" fill="none" stroke="#2a0830" stroke-width="1.8" stroke-opacity="0.45" stroke-linecap="round" stroke-linejoin="round"/>
<path d="M400.6 217.0 C405.5 214.8 419.8 207.8 430.0 204.0 C440.2 200.2 451.6 196.7 461.6 194.0 C471.6 191.3 481.5 189.5 490.0 188.0 C498.5 186.5 501.5 185.8 512.4 185.0 C523.3 184.2 548.3 183.6 555.5 183.3" fill="none" stroke="#2a0830" stroke-width="1.8" stroke-opacity="0.45" stroke-linecap="round" stroke-linejoin="round"/>
<path d="M393.0 212.0 C395.8 207.0 403.7 191.4 410.0 182.0 C416.3 172.6 422.7 163.8 431.0 155.5 C439.3 147.2 451.1 138.7 460.0 132.0 C468.9 125.3 480.3 118.2 484.4 115.5" fill="none" stroke="#2a0830" stroke-width="1.6" stroke-opacity="0.40" stroke-linecap="round" stroke-linejoin="round"/>
<ellipse cx="335.5" cy="392" rx="7.8" ry="8.5" fill="none" stroke="#2a0830" stroke-width="1.6" stroke-opacity=".6"/>
<path d="M329.5 377.0 C330.9 375.5 335.1 371.0 338.0 368.0 C340.9 365.0 344.2 361.0 347.0 359.0 C349.8 357.0 353.7 356.5 355.0 356.0" fill="none" stroke="#2a0830" stroke-width="1.5" stroke-opacity="0.50" stroke-linecap="round" stroke-linejoin="round"/>
<path d="M312.0 410.0 C313.7 410.7 318.5 413.7 322.0 414.0 C325.5 414.3 331.2 412.3 333.0 412.0" fill="none" stroke="#2a0830" stroke-width="1.5" stroke-opacity="0.50" stroke-linecap="round" stroke-linejoin="round"/>
</g>
<g filter="url(#b3)" fill="none" stroke-linecap="round">
<path d="M741.500 437.600 L772 431.800 L802 424.800 L802.500 426 L773 434.300 L742.500 441.600 Z" fill="#c4c4c4" stroke="#c4c4c4" stroke-width=".6"/>
<path d="M714 186.800 L724 188.800 L733 190" stroke="#b8b8b8" stroke-width="2.200"/>
<path d="M647.5 111.5 Q660 111.5 679 114" stroke="#8a8a8a" stroke-width="1.3"/>
<path d="M491.5 109 L497 105.5" stroke="#cfcfcf" stroke-width="1.4"/>
<path d="M551 359 L556 357.5 M551 360 L555.5 363" stroke="#b5b5b5" stroke-width="1"/>
</g>
<circle cx="624.6" cy="123.9" r="22" fill="none" stroke="#f4df42" stroke-width="2.7" filter="url(#b3)"/>
<path d="M624.5 117.500 V129.500 M618.500 123.500 H630.500" stroke="#f3a8e6" stroke-width="1.700" stroke-opacity=".7" fill="none" filter="url(#b3)"/>
<g filter="url(#b3)">
<path d="M134.4 166.3 C134.3 164.3 133.9 158.3 133.9 154.4 C133.9 150.6 134.3 145.0 134.4 143.2" fill="none" stroke="#6c6c6c" stroke-width="1.2" stroke-opacity="0.85" stroke-linecap="round" stroke-linejoin="round"/>
<path d="M131.6 149.4 C132.1 148.2 133.2 142.6 134.4 142.6 C135.7 142.6 138.2 148.2 138.9 149.4" fill="none" stroke="#6c6c6c" stroke-width="1.2" stroke-opacity="0.85" stroke-linecap="round" stroke-linejoin="round"/>
<path d="M151.3 150.8 C151.1 149.0 150.3 144.0 149.9 140.4 C149.6 136.7 149.2 131.0 149.1 129.1" fill="none" stroke="#6c6c6c" stroke-width="1.2" stroke-opacity="0.85" stroke-linecap="round" stroke-linejoin="round"/>
<path d="M146.0 135.6 C146.5 134.5 147.7 129.3 149.1 129.1 C150.5 128.9 153.5 133.5 154.4 134.4" fill="none" stroke="#6c6c6c" stroke-width="1.2" stroke-opacity="0.85" stroke-linecap="round" stroke-linejoin="round"/>
<path d="M170.2 160.6 C170.3 159.1 170.5 154.3 170.8 151.6 C171.0 148.9 171.5 145.8 171.6 144.6" fill="none" stroke="#6c6c6c" stroke-width="1.2" stroke-opacity="0.85" stroke-linecap="round" stroke-linejoin="round"/>
<path d="M167.7 150.5 C168.3 149.4 170.2 144.2 171.6 144.0 C173.1 143.9 175.6 148.7 176.4 149.6" fill="none" stroke="#6c6c6c" stroke-width="1.2" stroke-opacity="0.85" stroke-linecap="round" stroke-linejoin="round"/>
<path d="M183.5 178.7 C183.7 177.7 184.3 174.7 184.9 172.7 C185.4 170.8 186.5 168.1 186.8 167.1" fill="none" stroke="#6c6c6c" stroke-width="1.2" stroke-opacity="0.85" stroke-linecap="round" stroke-linejoin="round"/>
<path d="M181.5 171.6 C182.4 170.8 185.8 166.3 187.1 166.5 C188.5 166.8 189.2 171.9 189.6 173.0" fill="none" stroke="#6c6c6c" stroke-width="1.2" stroke-opacity="0.85" stroke-linecap="round" stroke-linejoin="round"/>
<path d="M115.3 205.7 C114.3 204.9 111.4 202.1 109.6 200.6 C107.9 199.1 105.7 197.3 104.9 196.7" fill="none" stroke="#6c6c6c" stroke-width="1.2" stroke-opacity="0.85" stroke-linecap="round" stroke-linejoin="round"/>
<path d="M103.2 200.1 C103.4 199.4 103.3 196.7 104.3 196.1 C105.3 195.6 108.5 196.6 109.4 196.7" fill="none" stroke="#6c6c6c" stroke-width="1.2" stroke-opacity="0.85" stroke-linecap="round" stroke-linejoin="round"/>
<path d="M137.8 194.4 C137.6 192.7 136.8 187.2 136.7 184.0 C136.6 180.9 136.7 177.5 137.3 175.6 C137.8 173.6 139.0 172.5 140.1 172.5 C141.1 172.4 142.5 172.9 143.5 175.3 C144.4 177.7 145.0 182.8 145.7 186.8 C146.4 190.9 147.1 197.4 147.4 199.5" fill="none" stroke="#6c6c6c" stroke-width="1.2" stroke-opacity="0.85" stroke-linecap="round" stroke-linejoin="round"/>
<path d="M147.4 197.3 C147.4 194.3 147.1 185.0 147.4 179.8 C147.7 174.6 148.1 169.4 149.1 166.3 C150.1 163.2 152.0 161.2 153.6 161.2 C155.2 161.2 157.4 162.9 158.7 166.3 C159.9 169.6 160.3 176.1 160.9 181.2 C161.6 186.3 162.3 194.1 162.6 196.7" fill="none" stroke="#6c6c6c" stroke-width="1.2" stroke-opacity="0.85" stroke-linecap="round" stroke-linejoin="round"/>
<path d="M164.3 195.6 C164.5 192.9 165.0 184.5 165.4 179.8 C165.9 175.1 166.1 170.2 167.1 167.4 C168.1 164.6 170.2 162.8 171.6 163.2 C173.0 163.5 174.9 166.4 175.6 169.6 C176.3 172.9 175.9 178.1 175.8 182.6 C175.8 187.1 175.4 194.3 175.3 196.7" fill="none" stroke="#6c6c6c" stroke-width="1.2" stroke-opacity="0.85" stroke-linecap="round" stroke-linejoin="round"/>
<path d="M177.0 197.3 C177.3 195.8 178.2 190.7 178.9 188.2 C179.6 185.8 180.3 184.1 181.2 182.6 C182.1 181.2 184.0 178.3 184.6 179.5 C185.1 180.7 184.7 186.3 184.6 189.6 C184.4 193.0 183.9 197.9 183.7 199.5" fill="none" stroke="#6c6c6c" stroke-width="1.2" stroke-opacity="0.85" stroke-linecap="round" stroke-linejoin="round"/>
<path d="M150.2 199.5 C150.3 197.2 150.6 189.9 150.8 185.4 C151.0 181.0 151.2 174.9 151.3 172.7" fill="none" stroke="#6c6c6c" stroke-width="1.0" stroke-opacity="0.55" stroke-linecap="round" stroke-linejoin="round"/>
<path d="M168.8 196.7 C169.0 194.3 169.6 186.8 169.9 182.6 C170.2 178.4 170.4 173.2 170.5 171.3" fill="none" stroke="#6c6c6c" stroke-width="1.0" stroke-opacity="0.55" stroke-linecap="round" stroke-linejoin="round"/>
<path d="M143.5 202.9 C144.8 202.3 148.4 200.3 151.3 199.5 C154.3 198.7 157.9 198.2 161.2 198.1 C164.5 198.0 167.9 198.3 171.1 198.9 C174.2 199.6 178.6 201.3 180.1 201.8" fill="none" stroke="#6c6c6c" stroke-width="1.2" stroke-opacity="0.85" stroke-linecap="round" stroke-linejoin="round"/>
<path d="M137.8 194.4 C136.8 195.3 134.1 197.8 131.6 199.5 C129.2 201.2 126.2 203.6 123.2 204.6 C120.2 205.6 115.2 205.3 113.6 205.4" fill="none" stroke="#6c6c6c" stroke-width="1.2" stroke-opacity="0.85" stroke-linecap="round" stroke-linejoin="round"/>
<path d="M113.6 205.4 C114.5 206.3 116.4 209.3 118.9 210.8 C121.5 212.2 125.5 213.1 128.8 214.2 C132.1 215.2 137.3 216.5 138.9 217.0" fill="none" stroke="#6c6c6c" stroke-width="1.2" stroke-opacity="0.85" stroke-linecap="round" stroke-linejoin="round"/>
<path d="M128.8 199.5 C129.5 201.2 131.3 206.5 133.0 209.4 C134.7 212.3 137.8 217.4 138.9 217.0 C140.1 216.5 140.0 209.9 140.1 206.5 C140.2 203.2 139.6 198.3 139.5 196.7" fill="none" stroke="#6c6c6c" stroke-width="1.2" stroke-opacity="0.85" stroke-linecap="round" stroke-linejoin="round"/>
<path d="M113.6 205.4 C114.5 207.3 116.6 212.7 118.9 216.4 C121.2 220.1 124.4 224.4 127.4 227.7 C130.4 231.0 134.8 233.1 136.7 236.1 C138.6 239.2 138.4 242.7 138.9 246.0 C139.5 249.3 139.9 254.2 140.1 255.8" fill="none" stroke="#6c6c6c" stroke-width="1.2" stroke-opacity="0.85" stroke-linecap="round" stroke-linejoin="round"/>
<path d="M184.6 179.5 C184.8 181.4 185.6 186.8 185.7 191.1 C185.8 195.3 185.6 200.0 185.1 205.1 C184.7 210.3 184.1 216.4 182.9 222.0 C181.7 227.7 179.6 232.7 178.1 238.9 C176.6 245.1 174.6 255.8 173.9 259.2" fill="none" stroke="#6c6c6c" stroke-width="1.2" stroke-opacity="0.85" stroke-linecap="round" stroke-linejoin="round"/>
<path d="M180.9 199.5 C181.0 201.4 181.4 206.5 181.2 210.8 C181.0 215.0 179.8 222.5 179.5 224.9" fill="none" stroke="#6c6c6c" stroke-width="1.0" stroke-opacity="0.55" stroke-linecap="round" stroke-linejoin="round"/>
<path d="M137.3 235.0 C138.7 235.3 143.1 236.6 145.7 236.7 C148.3 236.8 150.8 236.2 152.7 235.6 C154.7 234.9 156.7 233.2 157.5 232.7" fill="none" stroke="#6c6c6c" stroke-width="1.2" stroke-opacity="0.85" stroke-linecap="round" stroke-linejoin="round"/>
</g>
</g>
</svg>
  <!-- toolbar -->
  <div id="toolbar" class="abs"></div>
  <svg class="abs" style="left:0;top:0" width="1024" height="100" viewBox="0 0 1024 100">
    <defs>
      <linearGradient id="gcyl" x1="0" x2="1"><stop offset="0" stop-color="#fff"/><stop offset=".6" stop-color="#e2e2e2"/><stop offset="1" stop-color="#9a9a9a"/></linearGradient>
      <linearGradient id="gcone" x1="0" x2="1"><stop offset="0" stop-color="#fafafa"/><stop offset=".35" stop-color="#efe6da"/><stop offset=".65" stop-color="#d4bc9c"/><stop offset="1" stop-color="#77706a"/></linearGradient><linearGradient id="gcone2" x1="0" x2="1"><stop offset="0" stop-color="#b5b3aa"/><stop offset=".5" stop-color="#8d8a80"/><stop offset="1" stop-color="#6a675f"/></linearGradient><linearGradient id="gchrT" x1="0" x2="1"><stop offset="0" stop-color="#8a8a8a"/><stop offset=".35" stop-color="#fafafa"/><stop offset=".7" stop-color="#8a8a8a"/><stop offset="1" stop-color="#666"/></linearGradient>
      <filter id="tb" x="-5%" y="-20%" width="110%" height="140%"><feGaussianBlur stdDeviation=".4"/></filter>
    </defs>
    <g filter="url(#tb)">
    <g stroke="#dadada" stroke-width="1">
      <path d="M166.5 48V81M232.5 48V81M269.5 48V81M337.5 48V81M502.5 48V81M667.5 48V81M735.5 48V81M866.5 48V81"/>
    </g>
    <rect x="153" y="48.5" width="13" height="32" fill="#e9e9e9"/>
    <!-- undo -->
    <path d="M171 65.5 L180 58.5 L180 62.5 C185 63.5 189.5 62 193 58.5 C192.5 64.5 188 69 180 68.5 L180 72 Z" fill="#e8532b"/>
    <path d="M173.5 65.3 L179 61 L179.3 63.6 C184 64.6 188.5 63.5 191 61.5" fill="none" stroke="#f7a07c" stroke-width="1"/>
    <!-- redo -->
    <path d="M226 65.5 L217 58.5 L217 62.5 C212 63.5 207.5 62 204 58.5 C204.5 64.5 209 69 217 68.5 L217 72 Z" fill="#a5d6a0"/>
    <!-- magnifier -->
    <circle cx="249.5" cy="62" r="7.6" fill="#fafafa" stroke="#505050" stroke-width="1.4"/>
    <path d="M254.5 68 L258.8 73.8" stroke="#333" stroke-width="2.3" stroke-linecap="round"/>
    <!-- select rect -->
    <rect x="278.5" y="58" width="16.5" height="13" fill="none" stroke="#444" stroke-width="1.4" stroke-dasharray="2.6 1.6"/>
    <path d="M291.5 65.5 L299 71.5 L295.5 71.8 L293.5 75 Z" fill="#333" stroke="#f1f1f1" stroke-width=".6"/>
    <!-- faded select -->
    <rect x="311" y="58.5" width="16" height="12.5" fill="none" stroke="#c9b9b6" stroke-width="1.2" stroke-dasharray="2.4 1.6"/>
    <rect x="323" y="55" width="6.5" height="6.5" fill="#f2b3a4" stroke="#f1f1f1" stroke-width=".8"/>
    <!-- crop -->
    <path d="M350.5 56 V70 H364.5 M346 60.5 H360 V74.5 M350.5 70 L361.5 58.5" fill="none" stroke="#333" stroke-width="1.7"/>
    <!-- lasso move -->
    <circle cx="385.5" cy="64.5" r="7.6" fill="none" stroke="#444" stroke-width="1.3" stroke-dasharray="2.2 1.8"/>
    <circle cx="392" cy="70.5" r="5" fill="#f1f1f1"/>
    <path d="M392 66 V75 M387.5 70.5 H396.5" stroke="#333" stroke-width="1.2"/>
    <path d="M392 65 l-1.8 2.2h3.6z M392 76 l-1.8 -2.2h3.6z M386.5 70.5 l2.2 -1.8v3.6z M397.5 70.5 l-2.2 -1.8v3.6z" fill="#333"/>
    <!-- distort -->
    <path d="M412.5 57.5 L426.5 57 L429 71.5 L411 71.5 Z" fill="none" stroke="#444" stroke-width="1.3"/>
    <g fill="#f1f1f1" stroke="#444" stroke-width="1"><circle cx="412.5" cy="57.5" r="1.7"/><circle cx="426.5" cy="57" r="1.7"/><circle cx="429" cy="71.5" r="1.7"/><circle cx="411" cy="71.5" r="1.7"/></g>
    <!-- fill cylinder -->
    <path d="M444.5 57 V73.5 A7.7 2.6 0 0 0 460 73.5 V57 Z" fill="url(#gcyl)" stroke="#777" stroke-width="1"/>
    <ellipse cx="452.2" cy="57" rx="7.7" ry="2.6" fill="#f4f4f4" stroke="#777" stroke-width="1"/>
    <path d="M445 61.5 C440.5 62 440.5 70 445 70.5" fill="none" stroke="#666" stroke-width="1.4"/>
    <!-- ruler -->
    <g transform="rotate(-42 521 65)"><rect x="508.5" y="61" width="25" height="8" rx="1" fill="#f4f4f4" stroke="#7a7a7a" stroke-width="1.2"/><path d="M512.5 61v3.5M516.5 61v2.5M520.5 61v3.5M524.5 61v2.5M528.5 61v3.5" stroke="#777" stroke-width=".9"/></g>
    <!-- ellipse guide -->
    <circle cx="552.5" cy="65" r="10.2" fill="none" stroke="#7a7a7a" stroke-width="1.2"/>
    <ellipse cx="552.5" cy="65" rx="7.2" ry="3.3" fill="none" stroke="#727272" stroke-width="1.2"/>
    <path d="M545.5 65H559.5 M552.5 55v3 M552.5 72v3" stroke="#7a7a7a" stroke-width="1"/>
    <path d="M546.5 59.5 A8 8 0 0 1 558.5 59.5 M546.5 70.5 A8 8 0 0 0 558.5 70.5" fill="none" stroke="#888" stroke-width="1"/>
    <!-- french curve -->
    <path d="M573.5 71.5 C574.5 66 579 62 583 58.5 C587 55 594.5 53.5 596.5 58 C597.5 61.5 593.5 63 592 60.5 C589 60.5 587.5 64 586 68 C584.5 72.5 581 75.500 578.5 73 C577 71 579 69 580.500 70 C579 67.500 575.500 69.500 573.500 71.500 Z" fill="#f7f7f7" stroke="#7a7a7a" stroke-width="1.2" stroke-linejoin="round"/>
    <!-- perspective grid -->
    <g fill="none" stroke="#7a7a7a" stroke-width=".9">
      <path d="M607.500 62.500 L617.500 57.500 L627.500 62.500 V71 L617.500 74 L607.500 71 Z"/>
      <path d="M617.500 57.500 V74 M612.500 60 V72.500 M622.500 60 V72.500 M607.500 65.500 L617.500 63 L627.500 65.500 M607.500 68.300 L617.500 68.500 L627.500 68.300 M610 61.300 V71.700 M625 61.300 V71.700 M615 58.800 V73.300 M620 58.800 V73.300"/>
    </g>
    <!-- symmetry -->
    <path d="M650 54.500 V76" stroke="#727272" stroke-width="1.100" stroke-dasharray="2.600 1.600"/>
    <path d="M646 56.500 C640 57.500 641 62.500 644 64.500 C640.500 66.500 640 72 645.500 74" fill="none" stroke="#727272" stroke-width="1.400" stroke-linecap="round"/>
    <path d="M654 56.500 C660 57.500 659 62.500 656 64.500 C659.500 66.500 660 72 654.500 74" fill="none" stroke="#727272" stroke-width="1.400" stroke-linecap="round"/>
    <!-- steady stroke -->
    <path d="M675 68 C680.500 72.500 686 71 690 65.500" fill="none" stroke="#6a6a6a" stroke-width="1.700" stroke-linecap="round"/>
    <path d="M691.500 63.500 L697 56" fill="none" stroke="#6a6a6a" stroke-width="1.500" stroke-dasharray="1.600 2"/>
    <!-- shapes -->
    <circle cx="720.500" cy="61.500" r="7" fill="none" stroke="#727272" stroke-width="1.200"/>
    <rect x="708.500" y="61.500" width="12" height="12.500" fill="none" stroke="#6a6a6a" stroke-width="1.300"/>
    <!-- copy pages (disabled) -->
    <g fill="#f4f4f4" stroke="#d2d2d2" stroke-width="1">
      <path d="M746 57 h8 l3 3 v10 h-11z"/><path d="M749 59.500 h8 l3 3 v10 h-11z"/><path d="M752 62 h8 l3 3 v11 h-11z" fill="#e4e4e4"/>
    </g>
    <!-- brushes -->
    <path d="M781 54 C783.500 60 786 69 786.500 77.200 H774.200 C775 69 778 60 781 54 Z" fill="url(#gcone)" stroke="#9a9488" stroke-width=".6"/>
    <path d="M781 54 l1.300 4 h-2.500z" fill="#4a4540"/>
    <path d="M792.700 54 C794.500 59 796.500 65 797 70 L797.500 77.200 H788.200 L788.700 70 C789 65 791 59 792.700 54 Z" fill="url(#gcone2)" stroke="#77746c" stroke-width=".5"/>
    <path d="M788.500 71 H797.300 L797.500 77.200 H788.200 Z" fill="url(#gchrT)"/>
    <!-- four swatches -->
    <rect x="841" y="54" width="9.500" height="9.500" rx="2" fill="#eef0f2" stroke="#b8bec4" stroke-width=".8"/>
    <rect x="852.500" y="54" width="9.500" height="9.500" rx="2" fill="#c9d1d8" stroke="#aab2b9" stroke-width=".8"/>
    <rect x="841" y="65.500" width="9.500" height="9.500" rx="2" fill="#8a939b"/>
    <rect x="852.500" y="65.500" width="9.500" height="9.500" rx="2" fill="#3d4349"/>
    <!-- close -->
    <circle cx="873.500" cy="54" r="4.300" fill="#e3e3e3" stroke="#cfcfcf" stroke-width=".8"/>
    </g>
    <!-- T -->
    <text x="485" y="74" font-family="Liberation Serif, serif" font-size="27" text-anchor="middle" fill="#333" filter="url(#tb)">T</text>
  </svg>
  <!-- toolbar colour wheel -->
  <div class="abs" style="left:806.600px;top:51.900px;width:24px;height:24px;border-radius:50%;background:conic-gradient(from 0deg,#f5b800 0,#ff7a00 40deg,#e8201a 90deg,#e020c0 135deg,#4a20d8 175deg,#1060e0 205deg,#10b8e0 235deg,#20c830 275deg,#a0d810 315deg,#f0e000 340deg,#f5b800 360deg);filter:blur(.4px)"></div>
  <div class="abs" style="left:811.500px;top:56.800px;width:14.200px;height:14.200px;border-radius:50%;background:#f4f4f4"></div>
  <!-- colour puck -->
  <div class="abs" style="left:54.500px;top:38px;width:71px;height:71px;border-radius:50% 14px 50% 50%;background:linear-gradient(#5c5c5c,#4a4a4a 50%,#3f3f3f);box-shadow:0 0 1.500px rgba(40,40,40,.8);filter:blur(.4px)"></div>
  <div class="abs" style="left:112px;top:41.500px;width:10.500px;height:10.500px;border-radius:50%;background:#3c3c3c;box-shadow:0 0 1px #2e2e2e inset;filter:blur(.4px)"></div>
  <div class="abs" style="left:62.700px;top:48px;width:54.600px;height:54.600px;border-radius:50%;background:#772a70;box-shadow:0 0 0 1px #86527f;filter:blur(.4px)"></div>
  <!-- lagoon (corner arc) -->
  <svg class="abs" style="left:0;top:380px" width="200" height="152" viewBox="0 380 200 152">
    <defs>
      <filter id="lb" x="-5%" y="-5%" width="110%" height="110%"><feGaussianBlur stdDeviation=".5"/></filter>
      <linearGradient id="gchr2" x1="0" x2="1"><stop offset="0" stop-color="#6d6d6d"/><stop offset=".4" stop-color="#fafafa"/><stop offset="1" stop-color="#5a5a5a"/></linearGradient>
    </defs>
    <g filter="url(#lb)">
      <circle cx="6.100" cy="581.400" r="166.500" fill="#f4f4f4" stroke="#d8d8d8" stroke-width="1"/>
      <circle cx=".800" cy="589" r="136.700" fill="#808080" stroke="#c8c8c8" stroke-width="1"/>
      <!-- gear at left -->
      <circle cx="7" cy="432" r="4" fill="none" stroke="#7b8896" stroke-width="1.800" stroke-dasharray="1.600 1.200"/>
      <!-- small brush circle -->
      <circle cx="12" cy="479" r="7" fill="#d9d9d9" stroke="#f4f4f4" stroke-width="1"/>
      <path d="M12 473.500 L14 480 V484 H10 V480 Z" fill="#3a3a3a"/><path d="M10 481H14" stroke="#c9a64a" stroke-width="1"/>
      <!-- purple dot -->
      <circle cx="13" cy="500.500" r="6" fill="#7a2a72" stroke="#e9e9e9" stroke-width="1.500"/>
      <!-- arrow icon -->
      <ellipse cx="132" cy="512.500" rx="6" ry="1.300" fill="#b0b0b0"/>
      <path d="M123.100 496.200 L138.700 503.100 L128.300 511.800 Z" fill="#ececec" stroke="#858585" stroke-width="1.200" stroke-linejoin="round"/>
      <path d="M123.100 496.200 L130 505 L128.300 511.800 M130 505 L138.700 503.100" fill="none" stroke="#858585" stroke-width="1.100" stroke-linejoin="round"/>
      <!-- layers icon -->
      <path d="M138.500 523.500 H150 V536 H138.500 Z" fill="#dfe3e6" stroke="#9aa1a8" stroke-width="1"/>
      <path d="M142 527 H154 V540 H142 Z" fill="#8f99a3" stroke="#7a838c" stroke-width="1"/>
      <!-- bottom circles -->
      <circle cx="74.500" cy="536" r="13" fill="#f6f6f6"/>
      <path d="M66.500 534 l4 -4 v2.500 h3 v3 h-3 v2.500z" fill="#e8532b"/><path d="M82.500 534 l-4 -4 v2.500 h-3 v3 h3 v2.500z" fill="#e8532b"/>
      <circle cx="104.500" cy="536" r="12" fill="#b2b2b2"/>
    </g>
  </svg>
  <div class="abs" style="left:97.200px;top:465.100px;width:22.400px;height:22.400px;border-radius:50%;background:conic-gradient(from 0deg,#f5b800 0,#ff7a00 40deg,#e8201a 90deg,#e020c0 135deg,#4a20d8 175deg,#1060e0 205deg,#10b8e0 235deg,#20c830 275deg,#a0d810 315deg,#f0e000 340deg,#f5b800 360deg);filter:blur(.5px)"></div>
  <div class="abs" style="left:102.400px;top:470.300px;width:12px;height:12px;border-radius:50%;background:#f6f6f6;filter:blur(.3px)"></div>
  <!-- brush palette -->
  <div id="brushes" class="abs">
    <div class="ptitle"></div>
    <div class="pclose" style="left:52px;top:3px"></div>
    <div class="abs" style="left:0;top:46.500px;width:65px;height:1px;background:#dedede"></div>
    <div class="abs" style="left:0;bottom:0;width:65px;height:8.500px;background:#ececec;border-top:1px solid #dadada"></div>
    <div class="abs" style="left:25px;bottom:3.500px;width:13px;height:1px;background:#b5b5b5"></div>
  </div>
  <svg class="abs" style="left:0;top:0" width="100" height="532" viewBox="0 0 100 532">
    <defs>
      <clipPath id="bp"><rect x="19" y="166.500" width="65" height="328.500"/></clipPath>
      <linearGradient id="gsel" x1="0" x2="0" y1="0" y2="1"><stop offset="0" stop-color="#5f9df0"/><stop offset="1" stop-color="#a6cdfb"/></linearGradient>
      <linearGradient id="gchr" x1="0" x2="1"><stop offset="0" stop-color="#4c4c4c"/><stop offset=".3" stop-color="#fafafa"/><stop offset=".55" stop-color="#9a9a9a"/><stop offset=".8" stop-color="#f2f2f2"/><stop offset="1" stop-color="#3c3c3c"/></linearGradient>
      <linearGradient id="ggold" x1="0" x2="1"><stop offset="0" stop-color="#6b5518"/><stop offset=".3" stop-color="#f2e2a0"/><stop offset=".55" stop-color="#b89a3c"/><stop offset=".8" stop-color="#efe0a8"/><stop offset="1" stop-color="#5d4a14"/></linearGradient>
      <linearGradient id="gdark" x1="0" x2="1"><stop offset="0" stop-color="#3c3c3c"/><stop offset=".45" stop-color="#9a9a9a"/><stop offset=".8" stop-color="#444"/><stop offset="1" stop-color="#050505"/></linearGradient>
      <linearGradient id="gblue" x1="0" x2="1"><stop offset="0" stop-color="#a9c6e4"/><stop offset="1" stop-color="#fbfcfe"/></linearGradient>
      <linearGradient id="gdrop" x1="0" x2="0" y1="0" y2="1"><stop offset="0" stop-color="#f0f6fb"/><stop offset="1" stop-color="#98bde0"/></linearGradient>
      <linearGradient id="gpen" x1="0" x2="1"><stop offset="0" stop-color="#e9e2cf"/><stop offset=".5" stop-color="#fffdf6"/><stop offset="1" stop-color="#b9b09a"/></linearGradient>
      <filter id="bb" x="-10%" y="-5%" width="120%" height="110%"><feGaussianBlur stdDeviation=".45"/></filter>
    </defs>
    <g clip-path="url(#bp)" filter="url(#bb)">
      <!-- header icons -->
      <g stroke="#b4b4b4" stroke-width="1.200" fill="none">
        <path d="M29 194.500H41 M29 200.500H41 M32.500 192v5 M37.500 198v5"/>
        <rect x="61" y="193.500" width="13" height="3.500"/><path d="M61 200H64.500V203H61Z M65.700 200H69.300V203H65.700Z M70.500 200H74V203H70.500Z"/>
      </g>
      <!-- selected -->
      <rect x="20.700" y="215.800" width="28.200" height="28.400" rx="3" fill="url(#gsel)" stroke="#3a78d8" stroke-width="1.200"/>
      <!-- pencil -->
      <path d="M34.600 219.200 L40.700 243.600 H30 Z" fill="url(#gpen)"/>
      <path d="M34.600 219.200 L36.200 225.500 H33.100 Z" fill="#2a2a2a"/>
      <path d="M33 232 L36.600 232 L37.800 243.600 H32.200 Z" fill="#2f3135"/>
      <!-- airbrush chrome -->
      <path d="M65.300 219 H69.300 L69.800 225.500 L76.500 237.500 V243.300 H58.200 V237.500 L64.800 225.500 Z" fill="url(#gchr)" stroke="#666" stroke-width=".5"/>
      <path d="M58.200 237.500 H76.500 M58.200 240.300 H76.500" stroke="#555" stroke-width=".8"/>
      <!-- gold nozzle -->
      <path d="M32.300 250 H37 L37.600 256 L45.200 267.500 V274.600 H24.800 V267.500 L31.700 256 Z" fill="url(#ggold)" stroke="#5a4a1a" stroke-width=".5"/>
      <path d="M24.800 267.500 H45.200 M24.800 270.600 H45.200" stroke="#3a3a3a" stroke-width="1"/>
      <path d="M31.700 256 H37.600" stroke="#4a3d14" stroke-width=".8"/>
      <path d="M27 271.500 H43 V274.600 H27 Z" fill="url(#gchr)"/>
      <!-- chisel marker -->
      <path d="M64 258.500 L71.500 252.500 V262.500 H64 Z" fill="#d8d8d8" stroke="#777" stroke-width=".5"/>
      <path d="M64 261 H71.800 V265 H64 Z" fill="#8a8a8a"/>
      <rect x="62" y="264.500" width="11.800" height="9.300" rx="1" fill="url(#gdark)"/>
      <!-- block eraser -->
      <rect x="24.300" y="285.500" width="21" height="21.400" rx="1.500" fill="url(#gdark)"/>
      <path d="M24.300 287 a1.500 1.500 0 0 1 1.500 -1.500 h18 a1.500 1.500 0 0 1 1.500 1.500 v6.500 h-21 z" fill="#f1f1f1" stroke="#bbb" stroke-width=".4"/>
      <!-- rod w/ base -->
      <path d="M66.500 284 h1.600 v3 h.8 v1.500 h-.8 v9 c0 3 6 3.500 6.600 5.500 v1.200 h-14.800 v-1.200 c.600 -2 6.600 -2.500 6.600 -5.500 v-9 h-.8 v-1.500 h.8 z" fill="url(#gdark)"/>
      <!-- small brush -->
      <path d="M32.200 331 V326 C32.200 322.500 33.500 321.500 35.100 321.500 C36.700 321.500 38 322.500 38 326 V331 Z" fill="#6c5b4c"/>
      <path d="M32 330.500 H38.200 L39.600 338.700 H37 L35.100 334 L33.200 338.700 H30.600 Z" fill="url(#gchr)" stroke="#777" stroke-width=".3"/>
      <!-- fan brush -->
      <path d="M55 320.500 C61 316 73.500 316 79.600 320.500 L72 331 H62.600 Z" fill="#5c3d26"/>
      <path d="M57 320 C62 317.500 72.500 317.500 77.500 320" stroke="#7a5632" stroke-width="1" fill="none"/>
      <rect x="62.300" y="330" width="10.200" height="10" rx="1" fill="#6b4526"/>
      <ellipse cx="67.400" cy="331.800" rx="2.400" ry="3" fill="#e2c88a"/>
      <!-- cream brush -->
      <path d="M35.600 346 C38.500 351 39.800 358 38.600 365 H32.300 C31 358 32.500 351 35.600 346 Z" fill="#ecd9a6"/>
      <path d="M34 349 C33 355 33.500 360 34.500 365" stroke="#fff6de" stroke-width="1.200" fill="none"/>
      <path d="M37.500 352 C38.300 357 38 361 37.300 365" stroke="#c69a4a" stroke-width="1" fill="none"/>
      <rect x="32" y="363.500" width="7" height="3.500" fill="#6b4526"/>
      <rect x="29.700" y="366.500" width="11.700" height="6" rx="1" fill="#7b4c28"/>
      <!-- silver pointed -->
      <path d="M66.900 348 C69.500 353 71.300 360 70.800 366 L71.800 371.500 H69 L66.900 367.500 L64.800 371.500 H62 L63 366 C62.500 360 64.300 353 66.900 348 Z" fill="url(#gchr)" stroke="#777" stroke-width=".3"/>
      <!-- pen tip silver w/ dark base -->
      <path d="M33.900 380.300 H35.300 C38.500 386 40.500 392 40.500 398 H28.700 C28.700 392 30.700 386 33.900 380.300 Z" fill="url(#gchr)" stroke="#777" stroke-width=".3"/>
      <rect x="28.700" y="397.500" width="11.800" height="5.300" fill="#3f3f3f"/>
      <!-- small brown tip brush -->
      <path d="M64.500 396 V391 C64.500 388.500 65.700 388 67.500 388 C69.300 388 70.500 388.500 70.500 391 V396 Z" fill="#7a6452"/>
      <path d="M64.300 395.500 H70.700 L71.500 403 H69.300 L67.500 399 L65.700 403 H63.500 Z" fill="url(#gchr)"/>
      <!-- ink nib -->
      <path d="M35.200 409.800 C38 416 41.500 421 39.500 427 C38.500 430 36.500 431 37 433 H33.400 C33.900 431 31.900 430 30.900 427 C28.900 421 32.400 416 35.200 409.800 Z" fill="url(#gdark)"/>
      <path d="M35.200 414 C36.500 419 37.500 423 36 428" stroke="#f4f4f4" stroke-width="1.400" fill="none"/>
      <rect x="29.700" y="433" width="11" height="2.200" fill="#2a2a2a"/>
      <!-- water drop -->
      <path d="M67.300 412 C70 417 75.700 421.500 75.700 426.500 A8.400 7.500 0 0 1 58.900 426.500 C58.900 421.500 64.600 417 67.300 412 Z" fill="url(#gdrop)" stroke="#7ba3cf" stroke-width="1"/>
      <!-- triangle -->
      <path d="M35.200 444.500 L44.200 466 H26.200 Z" fill="url(#gblue)" stroke="#5b8fd0" stroke-width="1.400" stroke-linejoin="round"/>
      <!-- eraser dome -->
      <path d="M56.300 456 C56.300 450 61 449 67.200 449 C73.500 449 78 450 78 456 Z" fill="#f2f2f2" stroke="#9a9a9a" stroke-width=".6"/>
      <rect x="56.200" y="455" width="22" height="13.500" rx="1.500" fill="url(#gdark)"/>
      <!-- parabola -->
      <path d="M26 500 C29 486 31.500 477.800 34.700 477.800 C38 477.800 40.500 486 43.500 500 Z" fill="url(#gblue)" stroke="#5b8fd0" stroke-width="1.400"/>
      <!-- silver blob -->
      <path d="M67.300 478 C68.500 480 73.700 481.500 73.700 488 C73.700 493 71 497 67.300 497 C63.600 497 61 493 61 488 C61 481.500 66.100 480 67.300 478 Z" fill="url(#gchr)"/>
    </g>
  </svg>
  <!-- layers -->
  <div id="layers" class="abs">
    <div class="ptitle"></div>
    <div class="pclose" style="left:154px;top:3px"></div>
    <!-- blend dropdown -->
    <div class="abs" style="left:7.500px;top:42.500px;width:120px;height:16.500px;border:1px solid #d2d2d2;border-radius:3px;background:linear-gradient(#f7f7f7,#ebebeb)"></div>
    <div class="lt" style="left:53px;top:44.500px;font-size:9px;line-height:12px;color:#333">Normal</div>
    <div class="abs" style="left:115px;top:50px;width:0;height:0;border-left:3px solid transparent;border-right:3px solid transparent;border-top:3.500px solid #333"></div>
    <!-- opacity box -->
    <div class="abs" style="left:135.500px;top:41.500px;width:18px;height:18px;border:1px solid #cfcfcf;border-radius:3px;background:#fff"></div>
    <div class="lt" style="left:136.500px;top:44.500px;font-size:9.500px;line-height:12px;letter-spacing:-.3px;color:#333">100</div>
    <div class="abs" style="left:0;top:67px;width:167px;height:1px;background:#e4e4e4"></div>
    <!-- layer1 (selected) -->
    <div class="abs" style="left:.500px;top:68.500px;width:153px;height:53.500px;border:1.300px solid #4d8fdc;background:#fafafa"></div>
    <div class="abs" style="left:119px;top:69.500px;width:9.500px;height:51.500px;background:#78b0f2"></div>
    <div class="abs" style="left:119px;top:69.500px;width:9.500px;height:3.500px;background:#1f6fd2"></div>
    <div class="abs" style="left:128.500px;top:69.500px;width:1px;height:51.500px;background:#dcdcdc"></div>
    <div class="abs" style="left:130px;top:95px;width:22px;height:1px;background:#dcdcdc"></div>
    <div class="lt" style="left:28px;top:105px;line-height:12px">Layer1</div>
    <div class="abs" style="left:8px;top:106px;width:10px;height:10px;border-radius:50%;background:#e9e9e9;border:1px solid #dedede"></div>
    <!-- layer3 -->
    <div class="lt" style="left:28px;top:158.500px;line-height:12px">Layer3</div>
    <div class="abs" style="left:8px;top:159.500px;width:10px;height:10px;border-radius:50%;background:#e9e9e9;border:1px solid #dedede"></div>
    <div class="abs" style="left:0;top:175px;width:154px;height:1px;background:#e2e2e2"></div>
    <!-- background -->
    <div class="lt" style="left:28px;top:197.500px;line-height:12px">Background</div>
    <div class="abs" style="left:109.500px;top:187.500px;width:30.500px;height:30.500px;border-radius:50%;background:#fff;border:1px solid #e6e6e6"></div>
    <div class="abs" style="left:0;top:228.500px;width:154px;height:1px;background:#e2e2e2"></div>
    <div class="abs" style="left:153.500px;top:68px;width:1px;height:323px;background:#dcdcdc"></div>
    <div class="abs" style="left:0;bottom:0;width:167px;height:9.500px;background:#ececec;border-top:1px solid #dadada"></div>
    <div class="abs" style="left:76px;bottom:4px;width:15px;height:1px;background:#b0b0b0"></div>
  </div>
  <svg class="abs" style="left:848px;top:112px" width="168" height="240" viewBox="848 112 168 240">
    <defs><filter id="yb" x="-5%" y="-5%" width="110%" height="110%"><feGaussianBlur stdDeviation=".4"/></filter></defs>
    <g filter="url(#yb)">
    <!-- header icons -->
    <path d="M859 141H869.500M864.200 135.800V146.200" stroke="#8c8c8c" stroke-width="1.700"/>
    <path d="M890.500 137.500 h4.500 l1.200 1.500 h7 v7.500 h-12.700z" fill="#fafafa" stroke="#8c8c8c" stroke-width="1.100"/>
    <rect x="922" y="136" width="12.500" height="9.500" fill="#fafafa" stroke="#8c8c8c" stroke-width="1.100"/>
    <path d="M924 143.500 l2.200 -2 l1.500 1.300 l2 -3.500 l2.500 4.200z" fill="#8c8c8c"/>
    <rect x="957" y="136" width="8.500" height="9.500" rx="1" fill="#fafafa" stroke="#9a9a9a" stroke-width="1.100"/>
    <rect x="957" y="141.500" width="8.500" height="4" fill="#8c8c8c"/>
    <path d="M988.500 137.500H998.500M988.500 141H998.500M988.500 144.500H998.500" stroke="#8c8c8c" stroke-width="1.300"/>
    <!-- eyes -->
    <g fill="none" stroke="#6f6f6f" stroke-width="1.100">
      <path d="M855.500 190.500 C858.500 186.500 864.500 186.500 867.500 190.500 C864.500 194.500 858.500 194.500 855.500 190.500Z"/>
      <path d="M855.500 243.500 C858.500 239.500 864.500 239.500 867.500 243.500 C864.500 247.500 858.500 247.500 855.500 243.500Z"/>
      <path d="M853.800 315.300 C856.800 311.300 862.800 311.300 865.800 315.300 C862.800 319.300 856.800 319.300 853.800 315.300Z"/>
    </g>
    <circle cx="861.500" cy="190.500" r="1.700" fill="#555"/><circle cx="861.500" cy="243.500" r="1.700" fill="#555"/><circle cx="859.800" cy="315.300" r="1.700" fill="#555"/>
    <!-- layer1 thumbnail sketch -->
    <g fill="none" stroke="#b4b4b4" stroke-width=".8" stroke-opacity=".9">
      <path d="M874 194.500 l1.500 1.500 l-1.500 1.500"/>
      <path d="M889 196 l6 -3 l9 -1.500 l4 1 M895 193 l-1 6 l-3 4 l-4 3 M894 199 l6 2 l5 5 M888 207 l4 3 l-3 1 M900 201 l-2 6 l3 3 l8 .5 M904 192 l2 3 l-3 3"/>
    </g>
    <circle cx="925.200" cy="207.300" r="5.600" fill="none" stroke="#707070" stroke-width="1.400" stroke-linecap="round" stroke-dasharray=".4 4"/>
    <!-- up/down + lock -->
    <path d="M990 188 l4 4.500 h-8z M990 200.500 l4 -4.500 h-8z" fill="#666"/>
    <path d="M985 194.200H995" stroke="#666" stroke-width="1.100"/>
    <rect x="986.500" y="218" width="7.500" height="6.500" fill="#fafafa" stroke="#8a8a8a" stroke-width="1"/>
    <path d="M988 218 v-2.500 a2.300 2.300 0 0 1 4.600 0" fill="none" stroke="#8a8a8a" stroke-width="1"/>
    <path d="M988.300 220.500h4M988.300 222.500h4" stroke="#8a8a8a" stroke-width=".8"/>
    <!-- layer3 thumbnail -->
    <path d="M876 263.500 L879.500 261.500 L881 255 L880 249 L883 247.500 L887 242.500 L888.500 245 L893 242 L901.500 240.500 L900 244.500 L904 246 L909.500 246.800 L900 250 L894 256 L893 262 L889 265.500 L898 267.500 L910.500 267 L898 269.500 L888 270.500 L879 271 L877.500 267.500 Z" fill="#ec4ad4" stroke="#ec4ad4" stroke-width=".8" stroke-linejoin="round"/>
    </g>
  </svg>
  <!-- window chrome -->
  <div id="topstrip" class="abs"></div>
  <div id="titlebar" class="abs"><span>Autodesk SketchBook - Untitled @ 75.0% - Pro Membership</span></div>
  <div id="menubar" class="abs">
    <span style="left:2.500px">File</span><span style="left:28.500px">Edit</span><span style="left:56px">Image</span><span style="left:94.300px">Window</span><span style="left:141px">My Account</span><span style="left:204px">Help</span>
  </div>
  <svg class="abs" style="left:0;top:0" width="1024" height="22" viewBox="0 0 1024 22">
    <defs><linearGradient id="gico" x1="0" x2="0" y1="0" y2="1"><stop offset="0" stop-color="#fff"/><stop offset=".45" stop-color="#f6d9c8"/><stop offset=".7" stop-color="#e8743a"/><stop offset="1" stop-color="#b8441a"/></linearGradient>
    <filter id="cb" x="-5%" y="-20%" width="110%" height="140%"><feGaussianBlur stdDeviation=".4"/></filter></defs>
    <g filter="url(#cb)">
    <path d="M509.500 0 C510 3 512.500 4.600 515.500 4.600 C518.500 4.600 521 3 521.500 0 Z" fill="#1f93cc"/>
    <path d="M7.300 6.800 L11.300 17 H4.200 Z" fill="url(#gico)"/>
    <path d="M8.800 10.500 L11.300 17 H9.500 Z" fill="#5a2a1a" fill-opacity=".7"/>
    <path d="M930 10.500H938" stroke="#b5d6fb" stroke-width="1.200"/>
    <path d="M969 7.500H975.300V13" stroke="#b5d6fb" stroke-width="1.100" fill="none"/>
    <rect x="967.500" y="9" width="6" height="5.500" rx="1" fill="none" stroke="#c5dffc" stroke-width="1.200"/>
    <path d="M1005.300 6.800L1013 14.700M1013 6.800L1005.300 14.700" stroke="#d8eaff" stroke-width="1.200"/>
    </g>
  </svg>
  <div id="lborder" class="abs"></div>
  <div class="abs" style="left:1010.500px;top:112px;width:1.200px;height:401px;background:#dcecfa;opacity:.8"></div>
  <div id="rborder" class="abs"></div>
</div>
</body>
</html>
